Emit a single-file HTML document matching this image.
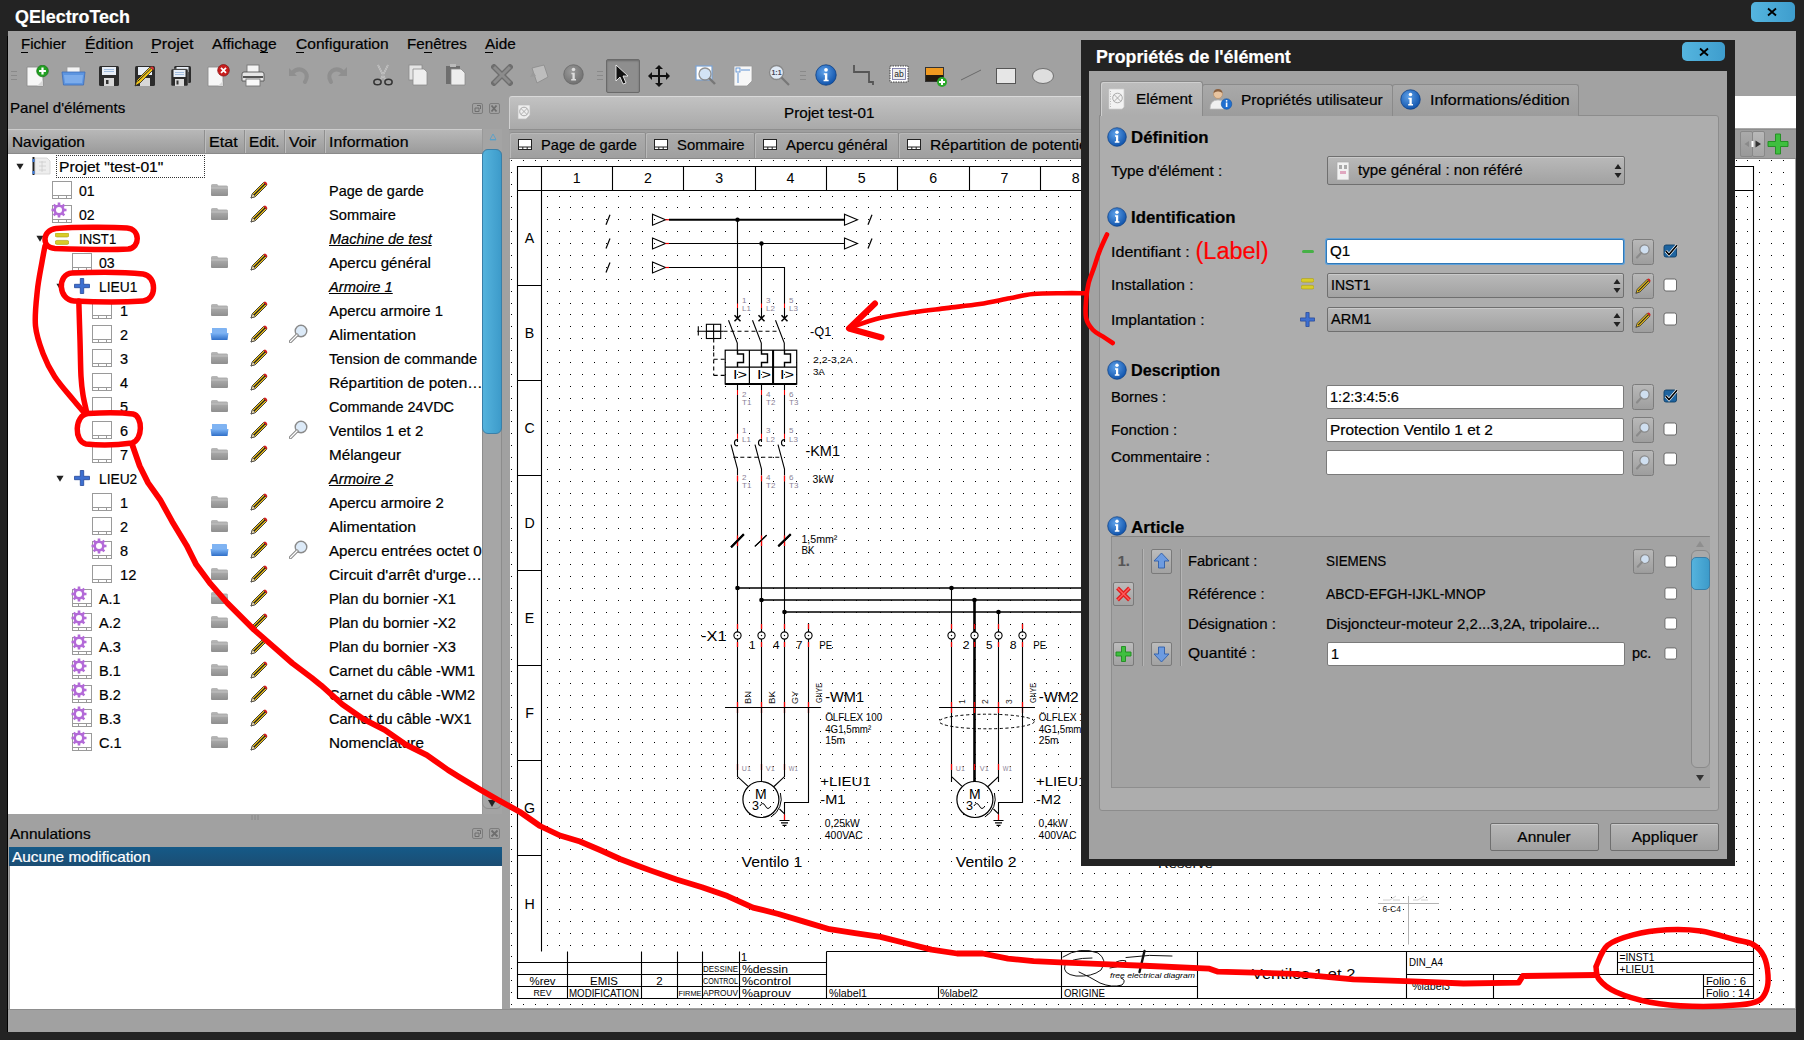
<!DOCTYPE html>
<html><head><meta charset="utf-8"><title>QElectroTech</title><style>
*{box-sizing:border-box}
html,body{margin:0;padding:0}
body{width:1804px;height:1040px;overflow:hidden;position:relative;background:#232323;font-family:"Liberation Sans",sans-serif;color:#000}
.a{position:absolute}
.t{position:absolute;white-space:nowrap;line-height:1;-webkit-text-stroke:0.2px currentColor}
</style></head>
<body>

<svg width="0" height="0" style="position:absolute">
<defs>
 <linearGradient id="gBlueF" x1="0" y1="0" x2="0" y2="1"><stop offset="0" stop-color="#7db4f5"/><stop offset="1" stop-color="#2f6fc8"/></linearGradient>
 <linearGradient id="gGrayF" x1="0" y1="0" x2="0" y2="1"><stop offset="0" stop-color="#b8b8b8"/><stop offset="1" stop-color="#8e8e8e"/></linearGradient>
 <radialGradient id="gInfo" cx="0.4" cy="0.35" r="0.7"><stop offset="0" stop-color="#5da0e8"/><stop offset="1" stop-color="#0c4fa8"/></radialGradient>
 <radialGradient id="gInfoG" cx="0.4" cy="0.35" r="0.7"><stop offset="0" stop-color="#9a9a9a"/><stop offset="1" stop-color="#6e6e6e"/></radialGradient>
 <linearGradient id="gBtn" x1="0" y1="0" x2="0" y2="1"><stop offset="0" stop-color="#b9b9b9"/><stop offset="1" stop-color="#9d9d9d"/></linearGradient>
 <symbol id="pg" viewBox="0 0 20 18"><rect x="0.5" y="0.5" width="19" height="17" fill="#fff" stroke="#9a9a9a"/><path d="M0.5 14.5H19.5M6.5 14.5V17.5M14.5 14.5V17.5" stroke="#9a9a9a" fill="none"/></symbol>
 <symbol id="gear" viewBox="0 0 16 16"><g fill="#b36ad8"><circle cx="8" cy="8" r="5.6"/><g stroke="#b36ad8" stroke-width="2.6"><path d="M8 0.5V15.5M0.5 8H15.5M2.7 2.7L13.3 13.3M13.3 2.7L2.7 13.3"/></g></g><circle cx="8" cy="8" r="3" fill="#fff"/></symbol>
 <symbol id="inst" viewBox="0 0 14 12"><rect x="0" y="0" width="14" height="4" rx="2" fill="#d8cc2a" stroke="#a89a10" stroke-width="0.6"/><rect x="0" y="7.4" width="14" height="4" rx="2" fill="#d8cc2a" stroke="#a89a10" stroke-width="0.6"/></symbol>
 <symbol id="lieu" viewBox="0 0 16 16"><path d="M6.3 0.5H9.7V6.3H15.5V9.7H9.7V15.5H6.3V9.7H0.5V6.3H6.3Z" fill="#3d6fd0" stroke="#24479a" stroke-width="0.8"/></symbol>
 <symbol id="fold" viewBox="0 0 19 14"><path d="M1 2.5Q1 1 2.5 1H7L8.5 2.5H16.5Q18 2.5 18 4V12Q18 13 17 13H2Q1 13 1 12Z" fill="url(#gGrayF)"/><path d="M1 5H18" stroke="#c9c9c9" stroke-width="0.8"/></symbol>
 <symbol id="foldb" viewBox="0 0 19 14"><path d="M2 1H16Q17 1 17 2V6H2Z" fill="#7fb3f2"/><path d="M0.5 6H18.5L17.5 13H1.5Z" fill="url(#gBlueF)"/></symbol>
 <symbol id="pen" viewBox="0 0 18 18"><path d="M1 17L2.5 12.5L13.5 1.5L16.5 4.5L5.5 15.5Z" fill="#f0c419" stroke="#2a2a2a" stroke-width="0.9"/><path d="M3.5 14.5L15 3" stroke="#222" stroke-width="1.3"/><path d="M13.5 1.5L16.5 4.5L17.3 3.7Q17.5 2.5 16.3 1.2Q15 0.3 14.3 0.7Z" fill="#d42020"/><path d="M1 17L2.5 12.5L5.5 15.5Z" fill="#e8d8b0" stroke="#333" stroke-width="0.6"/></symbol>
 <symbol id="mag" viewBox="0 0 19 19"><circle cx="12" cy="7" r="5.8" fill="#dceaf8" stroke="#8a8a8a" stroke-width="1.4"/><path d="M8 11L1.5 17.5" stroke="#8a8a8a" stroke-width="3.2" stroke-linecap="round"/><path d="M8 11L1.5 17.5" stroke="#fff" stroke-width="1.2" stroke-linecap="round"/></symbol>
 <symbol id="proj" viewBox="0 0 20 18"><path d="M4 1H16L19 4V17H4Z" fill="#eee" stroke="#d0d0d0" stroke-width="0.8"/><path d="M8 5H15M8 9H15M8 13H15M11 4V15" stroke="#ccc" stroke-width="0.8"/><rect x="1.5" y="0" width="2" height="18" fill="#222"/><rect x="1.5" y="2" width="2" height="3" fill="#3d7de0"/><rect x="1.5" y="14" width="2" height="3" fill="#3d7de0"/></symbol>
 <symbol id="tri" viewBox="0 0 10 9"><path d="M0.5 1H9.5L5 8.5Z" fill="#222"/></symbol>
 <symbol id="info" viewBox="0 0 20 20"><circle cx="10" cy="10" r="9.3" fill="url(#gInfo)" stroke="#0b3f85" stroke-width="0.7"/><circle cx="10" cy="5.3" r="1.7" fill="#fff"/><path d="M8 8.3H11.2V14.3H12.4V15.7H7.8V14.3H9V9.7H8Z" fill="#fff"/></symbol>
 <symbol id="infog" viewBox="0 0 20 20"><circle cx="10" cy="10" r="9.3" fill="url(#gInfoG)" stroke="#666" stroke-width="0.7"/><circle cx="10" cy="5.3" r="1.7" fill="#ddd"/><path d="M8 8.3H11.2V14.3H12.4V15.7H7.8V14.3H9V9.7H8Z" fill="#ddd"/></symbol>
 <symbol id="srch" viewBox="0 0 22 26"><rect x="0.5" y="0.5" width="21" height="25" rx="2" fill="url(#gBtn)" stroke="#7c7c7c"/><circle cx="12.5" cy="10.5" r="4.6" fill="#cfdff0" stroke="#8a8a8a" stroke-width="1.2"/><path d="M9.3 13.8L5 18.5" stroke="#8a8a8a" stroke-width="2.2" stroke-linecap="round"/></symbol>
 <symbol id="penb" viewBox="0 0 22 26"><rect x="0.5" y="0.5" width="21" height="25" rx="2" fill="url(#gBtn)" stroke="#7c7c7c"/><g transform="translate(3,5) scale(0.9)"><path d="M1 17L2.5 12.5L13.5 1.5L16.5 4.5L5.5 15.5Z" fill="#f0c419" stroke="#2a2a2a" stroke-width="0.9"/><path d="M3.5 14.5L15 3" stroke="#222" stroke-width="1.2"/><path d="M13.5 1.5L16.5 4.5L17.3 3.7Q17.5 2.5 16.3 1.2Q15 0.3 14.3 0.7Z" fill="#d42020"/></g></symbol>
 <symbol id="chk" viewBox="0 0 15 14"><rect x="1" y="1" width="12.5" height="12" rx="2" fill="#fff" stroke="#5e5e5e" stroke-width="0.9"/></symbol>
 <symbol id="chkon" viewBox="0 0 15 14"><rect x="1" y="1" width="12.5" height="12" rx="2" fill="#1e64a0" stroke="#0e3e68" stroke-width="0.9"/><path d="M2.8 7L6 10.5L14 1.2" stroke="#fff" stroke-width="3" fill="none"/><path d="M2.8 7L6 10.5L14 1.2" stroke="#000" stroke-width="1.6" fill="none"/></symbol>
 <symbol id="updn" viewBox="0 0 8 16"><path d="M4 1L7.5 6H0.5Z M4 15L7.5 10H0.5Z" fill="#222"/></symbol>
</defs>
</svg>
<div class="t" style="left:15.0px;top:7.8px;font-size:18px;color:#fff;font-weight:bold;"><span id="w1" style="display:inline-block;transform:scaleX(0.9930);transform-origin:left center;">QElectroTech</span></div>
<div class="a" style="left:1751px;top:2px;width:44px;height:20px;border-radius:5px;background:linear-gradient(90deg,#55b5df,#3e9dcd)"></div>
<svg class="a" style="left:1766px;top:7px" width="12" height="10"><path d="M2 1.5L10 8.5M10 1.5L2 8.5" stroke="#000" stroke-width="1.8"/></svg>
<div class="a" style="left:8px;top:31px;width:1788px;height:1001px;background:#a1a1a1"></div>
<div class="a" style="left:7px;top:36px;width:1px;height:996px;background:#000"></div>
<div class="t" style="left:21.0px;top:36.5px;font-size:14.5px;"><span id="w2" style="display:inline-block;transform:scaleX(1.0351);transform-origin:left center;">Fichier</span></div>
<div class="t" style="left:85.0px;top:36.5px;font-size:14.5px;"><span id="w3" style="display:inline-block;transform:scaleX(1.0894);transform-origin:left center;">Édition</span></div>
<div class="t" style="left:151.0px;top:36.5px;font-size:14.5px;"><span id="w4" style="display:inline-block;transform:scaleX(1.1229);transform-origin:left center;">Projet</span></div>
<div class="t" style="left:212.0px;top:36.5px;font-size:14.5px;"><span id="w5" style="display:inline-block;transform:scaleX(1.0745);transform-origin:left center;">Affichage</span></div>
<div class="t" style="left:296.0px;top:36.5px;font-size:14.5px;"><span id="w6" style="display:inline-block;transform:scaleX(1.0747);transform-origin:left center;">Configuration</span></div>
<div class="t" style="left:407.0px;top:36.5px;font-size:14.5px;"><span id="w7" style="display:inline-block;transform:scaleX(1.0458);transform-origin:left center;">Fenêtres</span></div>
<div class="t" style="left:485.0px;top:36.5px;font-size:14.5px;"><span id="w8" style="display:inline-block;transform:scaleX(1.0600);transform-origin:left center;">Aide</span></div>
<div class="a" style="left:21px;top:52px;width:7px;height:1px;background:#000"></div>
<div class="a" style="left:85px;top:52px;width:8px;height:1px;background:#000"></div>
<div class="a" style="left:151px;top:52px;width:7px;height:1px;background:#000"></div>
<div class="a" style="left:260px;top:52px;width:8px;height:1px;background:#000"></div>
<div class="a" style="left:296px;top:52px;width:8px;height:1px;background:#000"></div>
<div class="a" style="left:424px;top:52px;width:8px;height:1px;background:#000"></div>
<div class="a" style="left:485px;top:52px;width:8px;height:1px;background:#000"></div>
<div class="a" style="left:296px;top:52px;width:0px;height:0px;"></div>
<svg class="a" style="left:11px;top:70px" width="6" height="12" viewBox="0 0 6 12"><path d="M0 1.5H6M0 5.5H6M0 9.5H6" stroke="#8a8a8a" stroke-width="1"/></svg>
<svg class="a" style="left:26px;top:65px" width="24" height="22" viewBox="0 0 24 22"><path d="M1 2H12L17 7V21H1Z" fill="#f7f7f7" stroke="#8d8d8d" stroke-width="0.9"/><path d="M11 21L17 15V21" fill="#d9d9d9"/><circle cx="16.5" cy="6" r="5.8" fill="#22a022" stroke="#137013" stroke-width="0.7"/><path d="M16.5 2.6V9.4M13.1 6H19.9" stroke="#fff" stroke-width="2.2"/></svg>
<svg class="a" style="left:61px;top:65px" width="25" height="22" viewBox="0 0 25 22"><rect x="6" y="2" width="13" height="10" fill="#f4f4f4" stroke="#999" stroke-width="0.8"/><path d="M1 7H24L22.5 20H2.5Z" fill="#5d95e0" stroke="#3d6cb8" stroke-width="0.8"/><path d="M3 10H22L21 18H4Z" fill="#8ab6ef" opacity="0.7"/></svg>
<svg class="a" style="left:98px;top:65px" width="22" height="22" viewBox="0 0 22 22"><rect x="1" y="1" width="20" height="20" rx="1.5" fill="#2c2c2c"/><rect x="4" y="2" width="14" height="8" fill="#e8eef6"/><path d="M6 4.5H16M6 6.5H16" stroke="#8fb0d8" stroke-width="0.8"/><rect x="6" y="13" width="10" height="8" fill="#d8d8d8"/><rect x="8" y="15" width="2.5" height="4" fill="#333"/></svg>
<svg class="a" style="left:134px;top:65px" width="22" height="22" viewBox="0 0 22 22"><rect x="1" y="1" width="20" height="20" rx="1.5" fill="#2c2c2c"/><rect x="4" y="2" width="14" height="8" fill="#e8eef6"/><rect x="6" y="13" width="10" height="8" fill="#d8d8d8"/><path d="M1 21L3 15L16 2L19 5L6 18Z" fill="#f0c419" stroke="#222" stroke-width="0.8"/><path d="M3.5 16.5L17 3.5" stroke="#222" stroke-width="1"/><path d="M16 2L19 5L20 4Q20 2.5 18.5 1.5Z" fill="#d33"/></svg>
<svg class="a" style="left:170px;top:65px" width="22" height="22" viewBox="0 0 22 22"><rect x="4" y="1" width="17" height="17" rx="1.5" fill="#2c2c2c"/><rect x="6.5" y="2" width="12" height="5" fill="#e8eef6"/><rect x="1" y="4" width="17" height="17" rx="1.5" fill="#2c2c2c" stroke="#a0a0a0" stroke-width="0.6"/><rect x="3.5" y="5" width="12" height="7" fill="#e8eef6"/><path d="M5 7.5H14M5 9.5H14" stroke="#8fb0d8" stroke-width="0.8"/><rect x="5" y="14" width="9" height="7" fill="#d8d8d8"/><rect x="6.5" y="15.5" width="2" height="4" fill="#333"/></svg>
<svg class="a" style="left:207px;top:64px" width="24" height="23" viewBox="0 0 24 23"><path d="M1 3H12L16 7V22H1Z" fill="#f7f7f7" stroke="#8d8d8d" stroke-width="0.9"/><path d="M11 22L16 17V22" fill="#d9d9d9"/><circle cx="16.5" cy="6.3" r="5.8" fill="#c81e1e" stroke="#801010" stroke-width="0.7"/><path d="M14 3.8L19 8.8M19 3.8L14 8.8" stroke="#fff" stroke-width="1.8"/></svg>
<svg class="a" style="left:241px;top:64px" width="24" height="23" viewBox="0 0 24 23"><rect x="6" y="1" width="12" height="8" fill="#f4f4f4" stroke="#777" stroke-width="0.9"/><path d="M1 10Q1 8 3 8H21Q23 8 23 10V17H1Z" fill="#e6e6e6" stroke="#555" stroke-width="0.9"/><rect x="2" y="12" width="20" height="2" fill="#555"/><rect x="5" y="15" width="14" height="7" fill="#f9f9f9" stroke="#777" stroke-width="0.9"/></svg>
<svg class="a" style="left:288px;top:64px" width="22" height="22" viewBox="0 0 22 22"><path d="M4 9Q10 3 16 7Q21 11 17 18" fill="none" stroke="#8f8f8f" stroke-width="4" stroke-linecap="round"/><path d="M1 4V12H9Z" fill="#8f8f8f"/></svg>
<svg class="a" style="left:324px;top:64px" width="24" height="22" viewBox="0 0 24 22"><path d="M20 9Q14 3 8 7Q3 11 7 18" fill="none" stroke="#8f8f8f" stroke-width="4" stroke-linecap="round"/><path d="M23 3V12H14Z" fill="#8f8f8f"/></svg>
<svg class="a" style="left:372px;top:64px" width="22" height="22" viewBox="0 0 22 22"><path d="M6 1L13 15M16 1L9 15" stroke="#e8e8e8" stroke-width="1.6"/><path d="M6 1L13 15M16 1L9 15" stroke="#6a6a6a" stroke-width="0.5"/><ellipse cx="5.5" cy="18" rx="3.6" ry="2.8" fill="none" stroke="#333" stroke-width="1.6"/><ellipse cx="16.5" cy="18" rx="3.6" ry="2.8" fill="none" stroke="#333" stroke-width="1.6"/></svg>
<svg class="a" style="left:408px;top:64px" width="22" height="22" viewBox="0 0 22 22"><rect x="1" y="1" width="13" height="15" fill="#e4e4e4" stroke="#8a8a8a" stroke-width="0.8"/><path d="M5 5H16L19 8V21H5Z" fill="#eee" stroke="#8a8a8a" stroke-width="0.8"/></svg>
<svg class="a" style="left:445px;top:63px" width="22" height="23" viewBox="0 0 22 23"><rect x="1" y="3" width="14" height="18" fill="#6e6e6e"/><rect x="5" y="1" width="6" height="3" fill="#bbb"/><path d="M6 6H16L20 10V22H6Z" fill="#eee" stroke="#8a8a8a" stroke-width="0.8"/></svg>
<svg class="a" style="left:491px;top:64px" width="22" height="22" viewBox="0 0 22 22"><path d="M3 3L19 19M19 3L3 19" stroke="#6e6e6e" stroke-width="5.5" stroke-linecap="square"/><path d="M3 3L19 19M19 3L3 19" stroke="#8c8c8c" stroke-width="3"/></svg>
<svg class="a" style="left:527px;top:64px" width="24" height="22" viewBox="0 0 24 22"><path d="M5 4L17 1L21 13L10 19Z" fill="#bdbdbd" stroke="#8a8a8a" stroke-width="0.8"/><path d="M3 13L6 8L9 12" fill="#9a9a9a"/></svg>
<svg class="a" style="left:563px;top:64px" width="22" height="22" viewBox="0 0 22 22"><use href="#infog" width="21" height="21"/></svg>
<svg class="a" style="left:597px;top:70px" width="6" height="12" viewBox="0 0 6 12"><path d="M0 1.5H6M0 5.5H6M0 9.5H6" stroke="#8a8a8a" stroke-width="1"/></svg>
<div class="a" style="left:606px;top:59px;width:34px;height:34px;background:#8e8e8e;border:1px solid #6a6a6a;border-radius:2px;box-shadow:inset 0 1px 2px rgba(0,0,0,0.25)"></div>
<svg class="a" style="left:614px;top:64px" width="18" height="22" viewBox="0 0 18 22"><path d="M2 1V17L6 13L9 20L12 19L9 12H14Z" fill="#111" stroke="#fff" stroke-width="0.8"/></svg>
<svg class="a" style="left:647px;top:64px" width="24" height="24" viewBox="0 0 24 24"><path d="M12 1L16 5H13V11H19V8L23 12L19 16V13H13V19H16L12 23L8 19H11V13H5V16L1 12L5 8V11H11V5H8Z" fill="#111"/></svg>
<svg class="a" style="left:695px;top:64px" width="22" height="22" viewBox="0 0 22 22"><rect x="1" y="2" width="16" height="14" fill="#fff" stroke="#7aa3d6" stroke-width="1.2"/><circle cx="10" cy="10" r="6" fill="#cfe0f4" stroke="#888" stroke-width="1.3" opacity="0.9"/><path d="M14 14L20 20" stroke="#777" stroke-width="2.4"/></svg>
<svg class="a" style="left:733px;top:65px" width="20" height="22" viewBox="0 0 20 22"><path d="M1 1H19V16L14 21H1Z" fill="#f7f7f7" stroke="#999" stroke-width="0.8"/><rect x="3" y="3" width="4" height="4" fill="none" stroke="#4a86d0" stroke-width="0.8"/><path d="M5 8V18M8 5H17" stroke="#4a86d0" stroke-width="0.9"/></svg>
<svg class="a" style="left:768px;top:64px" width="24" height="24" viewBox="0 0 24 24"><circle cx="8.5" cy="8.5" r="7" fill="#dfe9f5" stroke="#888" stroke-width="1.3"/><text x="8.5" y="11" font-size="7" text-anchor="middle" font-family="Liberation Sans" font-weight="bold" fill="#445">1:1</text><path d="M13.5 13.5L21 21" stroke="#777" stroke-width="2.2"/></svg>
<svg class="a" style="left:800px;top:70px" width="6" height="12" viewBox="0 0 6 12"><path d="M0 1.5H6M0 5.5H6M0 9.5H6" stroke="#8a8a8a" stroke-width="1"/></svg>
<svg class="a" style="left:815px;top:64px" width="23" height="23" viewBox="0 0 23 23"><use href="#info" width="22" height="22"/></svg>
<svg class="a" style="left:852px;top:64px" width="24" height="22" viewBox="0 0 24 22"><path d="M2 1V8H17V18H21V21" fill="none" stroke="#555" stroke-width="1.8"/></svg>
<svg class="a" style="left:888px;top:64px" width="22" height="22" viewBox="0 0 22 22"><rect x="2" y="2" width="18" height="16" fill="#fff" stroke="#333" stroke-width="0.9" stroke-dasharray="1.5,1"/><rect x="4.5" y="4.5" width="13" height="11" fill="#eee" stroke="#6a6aa0" stroke-width="0.8"/><text x="11" y="13" font-size="8.5" text-anchor="middle" font-family="Liberation Sans" fill="#222">ab</text></svg>
<svg class="a" style="left:924px;top:64px" width="24" height="24" viewBox="0 0 24 24"><rect x="1" y="3" width="19" height="15" fill="#333"/><rect x="2" y="4" width="17" height="7" fill="#f09a20"/><rect x="2" y="11" width="17" height="6" fill="#221a10"/><circle cx="18" cy="18" r="5" fill="#2aa82a"/><path d="M18 15V21M15 18H21" stroke="#fff" stroke-width="2"/></svg>
<svg class="a" style="left:960px;top:68px" width="22" height="14" viewBox="0 0 22 14"><path d="M1 12L21 2" stroke="#6a6a6a" stroke-width="1"/></svg>
<svg class="a" style="left:995px;top:66px" width="22" height="20" viewBox="0 0 22 20"><rect x="1.5" y="2.5" width="19" height="15" fill="#e6e6e6" stroke="#555" stroke-width="1"/></svg>
<svg class="a" style="left:1031px;top:66px" width="24" height="20" viewBox="0 0 24 20"><ellipse cx="12" cy="10" rx="10.5" ry="7.5" fill="#dedede" stroke="#666" stroke-width="0.9"/></svg>
<div class="t" style="left:10.0px;top:101.4px;font-size:14.5px;"><span id="w9" style="display:inline-block;transform:scaleX(1.0402);transform-origin:left center;">Panel d'éléments</span></div>
<div class="a" style="left:472px;top:103px;width:11px;height:11px;border:1px solid #7d7d7d;border-radius:2px"></div>
<div class="a" style="left:489px;top:103px;width:11px;height:11px;border:1px solid #7d7d7d;border-radius:2px"></div>
<svg class="a" style="left:472px;top:103px" width="30" height="11"><path d="M3 5H7V8.5H3Z M5 2.5H8.5V6" fill="none" stroke="#6e6e6e" stroke-width="1"/><path d="M19.5 2.5L24.5 8.5M24.5 2.5L19.5 8.5" stroke="#6e6e6e" stroke-width="1.8"/></svg>
<div class="a" style="left:8px;top:129px;width:474px;height:25px;background:linear-gradient(#b8b8b8,#9b9b9b);border-top:1px solid #cdcdcd;border-bottom:1px solid #8a8a8a"></div>
<div class="a" style="left:204px;top:130px;width:1px;height:23px;background:#8f8f8f;box-shadow:1px 0 0 #bdbdbd"></div>
<div class="a" style="left:244px;top:130px;width:1px;height:23px;background:#8f8f8f;box-shadow:1px 0 0 #bdbdbd"></div>
<div class="a" style="left:284px;top:130px;width:1px;height:23px;background:#8f8f8f;box-shadow:1px 0 0 #bdbdbd"></div>
<div class="a" style="left:324px;top:130px;width:1px;height:23px;background:#8f8f8f;box-shadow:1px 0 0 #bdbdbd"></div>
<div class="t" style="left:12.3px;top:134.7px;font-size:14.5px;"><span id="w10" style="display:inline-block;transform:scaleX(1.0622);transform-origin:left center;">Navigation</span></div>
<div class="t" style="left:208.8px;top:134.7px;font-size:14.5px;"><span id="w11" style="display:inline-block;transform:scaleX(1.1099);transform-origin:left center;">Etat</span></div>
<div class="t" style="left:249.4px;top:134.7px;font-size:14.5px;"><span id="w12" style="display:inline-block;transform:scaleX(1.0534);transform-origin:left center;">Edit.</span></div>
<div class="t" style="left:289.3px;top:134.7px;font-size:14.5px;"><span id="w13" style="display:inline-block;transform:scaleX(1.0924);transform-origin:left center;">Voir</span></div>
<div class="t" style="left:329.2px;top:134.7px;font-size:14.5px;"><span id="w14" style="display:inline-block;transform:scaleX(1.0961);transform-origin:left center;">Information</span></div>
<div class="a" style="left:8px;top:154px;width:474px;height:660px;background:#fff"></div>
<div class="a" style="left:482px;top:129px;width:20px;height:685px;background:#a4a4a4;border-left:1px solid #999"></div>
<svg class="a" style="left:489px;top:133px" width="8" height="8"><path d="M4 1L7 6.5H1Z" fill="none" stroke="#5aa0c8" stroke-width="0.9"/><path d="M1 6.8H7" stroke="#5aa0c8" stroke-width="1.2"/></svg>
<div class="a" style="left:482px;top:149px;width:20px;height:660px;background:#a6a6a6;border:1px solid #8c8c8c;border-radius:6px"></div>
<div class="a" style="left:482px;top:149px;width:20px;height:285px;background:linear-gradient(90deg,#55b3dd,#3d9bca);border:1px solid #3a7fa8;border-radius:6px"></div>
<svg class="a" style="left:487px;top:799px" width="10" height="9"><path d="M1 1H9L5 8Z" fill="#222"/></svg>
<svg class="a" style="left:16.2px;top:162.8px;" width="8" height="7.2"><use href="#tri"/></svg>
<svg class="a" style="left:31px;top:157px;" width="20" height="18"><use href="#proj"/></svg>
<div class="t" style="left:59.0px;top:159.7px;font-size:14.5px;"><span id="w15" style="display:inline-block;transform:scaleX(1.0815);transform-origin:left center;">Projet "test-01"</span></div>
<svg class="a" style="left:52px;top:181px;" width="20" height="18"><use href="#pg"/></svg>
<div class="t" style="left:79.0px;top:183.7px;font-size:14.5px;"><span id="w16" style="display:inline-block;transform:scaleX(0.9705);transform-origin:left center;">01</span></div>
<svg class="a" style="left:210px;top:183px;" width="19" height="14"><use href="#fold"/></svg>
<svg class="a" style="left:250px;top:181px;" width="18" height="18"><use href="#pen"/></svg>
<div class="t" style="left:328.5px;top:183.7px;font-size:14.5px;"><span id="w17" style="display:inline-block;transform:scaleX(0.9964);transform-origin:left center;">Page de garde</span></div>
<svg class="a" style="left:52px;top:205px;" width="20" height="18"><use href="#pg"/></svg>
<svg class="a" style="left:51px;top:202px;" width="16" height="16"><use href="#gear"/></svg>
<div class="t" style="left:79.0px;top:207.7px;font-size:14.5px;"><span id="w18" style="display:inline-block;transform:scaleX(0.9705);transform-origin:left center;">02</span></div>
<svg class="a" style="left:210px;top:207px;" width="19" height="14"><use href="#fold"/></svg>
<svg class="a" style="left:250px;top:205px;" width="18" height="18"><use href="#pen"/></svg>
<div class="t" style="left:328.5px;top:207.7px;font-size:14.5px;"><span id="w19" style="display:inline-block;transform:scaleX(1.0127);transform-origin:left center;">Sommaire</span></div>
<svg class="a" style="left:36.2px;top:234.8px;" width="8" height="7.2"><use href="#tri"/></svg>
<svg class="a" style="left:55px;top:233px;" width="14" height="12"><use href="#inst"/></svg>
<div class="t" style="left:79.0px;top:231.7px;font-size:14.5px;"><span id="w20" style="display:inline-block;transform:scaleX(0.9049);transform-origin:left center;">INST1</span></div>
<div class="t" style="left:328.5px;top:231.7px;font-size:14.5px;font-style:italic;text-decoration:underline"><span id="w21" style="display:inline-block;transform:scaleX(1.0032);transform-origin:left center;text-decoration:underline">Machine de test</span></div>
<svg class="a" style="left:72px;top:253px;" width="20" height="18"><use href="#pg"/></svg>
<div class="t" style="left:99.0px;top:255.7px;font-size:14.5px;"><span id="w22" style="display:inline-block;transform:scaleX(0.9705);transform-origin:left center;">03</span></div>
<svg class="a" style="left:210px;top:255px;" width="19" height="14"><use href="#fold"/></svg>
<svg class="a" style="left:250px;top:253px;" width="18" height="18"><use href="#pen"/></svg>
<div class="t" style="left:328.5px;top:255.7px;font-size:14.5px;"><span id="w23" style="display:inline-block;transform:scaleX(1.0356);transform-origin:left center;">Apercu général</span></div>
<svg class="a" style="left:56.2px;top:282.8px;" width="8" height="7.2"><use href="#tri"/></svg>
<svg class="a" style="left:74px;top:278px;" width="16" height="16"><use href="#lieu"/></svg>
<div class="t" style="left:99.0px;top:279.7px;font-size:14.5px;"><span id="w24" style="display:inline-block;transform:scaleX(0.9511);transform-origin:left center;">LIEU1</span></div>
<div class="t" style="left:328.5px;top:279.7px;font-size:14.5px;font-style:italic;text-decoration:underline"><span id="w25" style="display:inline-block;transform:scaleX(1.0136);transform-origin:left center;text-decoration:underline">Armoire 1</span></div>
<svg class="a" style="left:92px;top:301px;" width="20" height="18"><use href="#pg"/></svg>
<div class="t" style="left:120.0px;top:303.7px;font-size:14.5px;">1</div>
<svg class="a" style="left:210px;top:303px;" width="19" height="14"><use href="#fold"/></svg>
<svg class="a" style="left:250px;top:301px;" width="18" height="18"><use href="#pen"/></svg>
<div class="t" style="left:328.5px;top:303.7px;font-size:14.5px;"><span id="w26" style="display:inline-block;transform:scaleX(1.0244);transform-origin:left center;">Apercu armoire 1</span></div>
<svg class="a" style="left:92px;top:325px;" width="20" height="18"><use href="#pg"/></svg>
<div class="t" style="left:120.0px;top:327.7px;font-size:14.5px;">2</div>
<svg class="a" style="left:210px;top:327px;" width="19" height="14"><use href="#foldb"/></svg>
<svg class="a" style="left:250px;top:325px;" width="18" height="18"><use href="#pen"/></svg>
<svg class="a" style="left:289px;top:324px;" width="19" height="19"><use href="#mag"/></svg>
<div class="t" style="left:328.5px;top:327.7px;font-size:14.5px;"><span id="w27" style="display:inline-block;transform:scaleX(1.0904);transform-origin:left center;">Alimentation</span></div>
<svg class="a" style="left:92px;top:349px;" width="20" height="18"><use href="#pg"/></svg>
<div class="t" style="left:120.0px;top:351.7px;font-size:14.5px;">3</div>
<svg class="a" style="left:210px;top:351px;" width="19" height="14"><use href="#fold"/></svg>
<svg class="a" style="left:250px;top:349px;" width="18" height="18"><use href="#pen"/></svg>
<div class="t" style="left:328.5px;top:351.7px;font-size:14.5px;"><span id="w28" style="display:inline-block;transform:scaleX(1.0159);transform-origin:left center;">Tension de commande</span></div>
<svg class="a" style="left:92px;top:373px;" width="20" height="18"><use href="#pg"/></svg>
<div class="t" style="left:120.0px;top:375.7px;font-size:14.5px;">4</div>
<svg class="a" style="left:210px;top:375px;" width="19" height="14"><use href="#fold"/></svg>
<svg class="a" style="left:250px;top:373px;" width="18" height="18"><use href="#pen"/></svg>
<div class="t" style="left:328.5px;top:375.7px;font-size:14.5px;"><span id="w29" style="display:inline-block;transform:scaleX(1.0584);transform-origin:left center;">Répartition de poten…</span></div>
<svg class="a" style="left:92px;top:397px;" width="20" height="18"><use href="#pg"/></svg>
<div class="t" style="left:120.0px;top:399.7px;font-size:14.5px;">5</div>
<svg class="a" style="left:210px;top:399px;" width="19" height="14"><use href="#fold"/></svg>
<svg class="a" style="left:250px;top:397px;" width="18" height="18"><use href="#pen"/></svg>
<div class="t" style="left:328.5px;top:399.7px;font-size:14.5px;"><span id="w30" style="display:inline-block;transform:scaleX(0.9941);transform-origin:left center;">Commande 24VDC</span></div>
<svg class="a" style="left:92px;top:421px;" width="20" height="18"><use href="#pg"/></svg>
<div class="t" style="left:120.0px;top:423.7px;font-size:14.5px;">6</div>
<svg class="a" style="left:210px;top:423px;" width="19" height="14"><use href="#foldb"/></svg>
<svg class="a" style="left:250px;top:421px;" width="18" height="18"><use href="#pen"/></svg>
<svg class="a" style="left:289px;top:420px;" width="19" height="19"><use href="#mag"/></svg>
<div class="t" style="left:328.5px;top:423.7px;font-size:14.5px;"><span id="w31" style="display:inline-block;transform:scaleX(1.0346);transform-origin:left center;">Ventilos 1 et 2</span></div>
<svg class="a" style="left:92px;top:445px;" width="20" height="18"><use href="#pg"/></svg>
<div class="t" style="left:120.0px;top:447.7px;font-size:14.5px;">7</div>
<svg class="a" style="left:210px;top:447px;" width="19" height="14"><use href="#fold"/></svg>
<svg class="a" style="left:250px;top:445px;" width="18" height="18"><use href="#pen"/></svg>
<div class="t" style="left:328.5px;top:447.7px;font-size:14.5px;"><span id="w32" style="display:inline-block;transform:scaleX(1.0518);transform-origin:left center;">Mélangeur</span></div>
<svg class="a" style="left:56.2px;top:474.8px;" width="8" height="7.2"><use href="#tri"/></svg>
<svg class="a" style="left:74px;top:470px;" width="16" height="16"><use href="#lieu"/></svg>
<div class="t" style="left:99.0px;top:471.7px;font-size:14.5px;"><span id="w33" style="display:inline-block;transform:scaleX(0.9485);transform-origin:left center;">LIEU2</span></div>
<div class="t" style="left:328.5px;top:471.7px;font-size:14.5px;font-style:italic;text-decoration:underline"><span id="w34" style="display:inline-block;transform:scaleX(1.0201);transform-origin:left center;text-decoration:underline">Armoire 2</span></div>
<svg class="a" style="left:92px;top:493px;" width="20" height="18"><use href="#pg"/></svg>
<div class="t" style="left:120.0px;top:495.7px;font-size:14.5px;">1</div>
<svg class="a" style="left:210px;top:495px;" width="19" height="14"><use href="#fold"/></svg>
<svg class="a" style="left:250px;top:493px;" width="18" height="18"><use href="#pen"/></svg>
<div class="t" style="left:328.5px;top:495.7px;font-size:14.5px;"><span id="w35" style="display:inline-block;transform:scaleX(1.0316);transform-origin:left center;">Apercu armoire 2</span></div>
<svg class="a" style="left:92px;top:517px;" width="20" height="18"><use href="#pg"/></svg>
<div class="t" style="left:120.0px;top:519.7px;font-size:14.5px;">2</div>
<svg class="a" style="left:210px;top:519px;" width="19" height="14"><use href="#fold"/></svg>
<svg class="a" style="left:250px;top:517px;" width="18" height="18"><use href="#pen"/></svg>
<div class="t" style="left:328.5px;top:519.7px;font-size:14.5px;"><span id="w36" style="display:inline-block;transform:scaleX(1.0904);transform-origin:left center;">Alimentation</span></div>
<svg class="a" style="left:92px;top:541px;" width="20" height="18"><use href="#pg"/></svg>
<svg class="a" style="left:91px;top:538px;" width="16" height="16"><use href="#gear"/></svg>
<div class="t" style="left:120.0px;top:543.7px;font-size:14.5px;">8</div>
<svg class="a" style="left:210px;top:543px;" width="19" height="14"><use href="#foldb"/></svg>
<svg class="a" style="left:250px;top:541px;" width="18" height="18"><use href="#pen"/></svg>
<svg class="a" style="left:289px;top:540px;" width="19" height="19"><use href="#mag"/></svg>
<div class="t" style="left:328.5px;top:543.7px;font-size:14.5px;"><span id="w37" style="display:inline-block;transform:scaleX(1.0469);transform-origin:left center;">Apercu entrées octet 0</span></div>
<svg class="a" style="left:92px;top:565px;" width="20" height="18"><use href="#pg"/></svg>
<div class="t" style="left:120.0px;top:567.7px;font-size:14.5px;"><span id="w38" style="display:inline-block;transform:scaleX(1.0174);transform-origin:left center;">12</span></div>
<svg class="a" style="left:210px;top:567px;" width="19" height="14"><use href="#fold"/></svg>
<svg class="a" style="left:250px;top:565px;" width="18" height="18"><use href="#pen"/></svg>
<div class="t" style="left:328.5px;top:567.7px;font-size:14.5px;"><span id="w39" style="display:inline-block;transform:scaleX(1.0598);transform-origin:left center;">Circuit d'arrêt d'urge…</span></div>
<svg class="a" style="left:72px;top:589px;" width="20" height="18"><use href="#pg"/></svg>
<svg class="a" style="left:71px;top:586px;" width="16" height="16"><use href="#gear"/></svg>
<div class="t" style="left:99.0px;top:591.7px;font-size:14.5px;"><span id="w40" style="display:inline-block;transform:scaleX(0.9822);transform-origin:left center;">A.1</span></div>
<svg class="a" style="left:210px;top:591px;" width="19" height="14"><use href="#fold"/></svg>
<svg class="a" style="left:250px;top:589px;" width="18" height="18"><use href="#pen"/></svg>
<div class="t" style="left:328.5px;top:591.7px;font-size:14.5px;"><span id="w41" style="display:inline-block;transform:scaleX(1.0151);transform-origin:left center;">Plan du bornier -X1</span></div>
<svg class="a" style="left:72px;top:613px;" width="20" height="18"><use href="#pg"/></svg>
<svg class="a" style="left:71px;top:610px;" width="16" height="16"><use href="#gear"/></svg>
<div class="t" style="left:99.0px;top:615.7px;font-size:14.5px;">A.2</div>
<svg class="a" style="left:210px;top:615px;" width="19" height="14"><use href="#fold"/></svg>
<svg class="a" style="left:250px;top:613px;" width="18" height="18"><use href="#pen"/></svg>
<div class="t" style="left:328.5px;top:615.7px;font-size:14.5px;"><span id="w42" style="display:inline-block;transform:scaleX(1.0151);transform-origin:left center;">Plan du bornier -X2</span></div>
<svg class="a" style="left:72px;top:637px;" width="20" height="18"><use href="#pg"/></svg>
<svg class="a" style="left:71px;top:634px;" width="16" height="16"><use href="#gear"/></svg>
<div class="t" style="left:99.0px;top:639.7px;font-size:14.5px;">A.3</div>
<svg class="a" style="left:210px;top:639px;" width="19" height="14"><use href="#fold"/></svg>
<svg class="a" style="left:250px;top:637px;" width="18" height="18"><use href="#pen"/></svg>
<div class="t" style="left:328.5px;top:639.7px;font-size:14.5px;"><span id="w43" style="display:inline-block;transform:scaleX(1.0151);transform-origin:left center;">Plan du bornier -X3</span></div>
<svg class="a" style="left:72px;top:661px;" width="20" height="18"><use href="#pg"/></svg>
<svg class="a" style="left:71px;top:658px;" width="16" height="16"><use href="#gear"/></svg>
<div class="t" style="left:99.0px;top:663.7px;font-size:14.5px;">B.1</div>
<svg class="a" style="left:210px;top:663px;" width="19" height="14"><use href="#fold"/></svg>
<svg class="a" style="left:250px;top:661px;" width="18" height="18"><use href="#pen"/></svg>
<div class="t" style="left:328.5px;top:663.7px;font-size:14.5px;"><span id="w44" style="display:inline-block;transform:scaleX(1.0065);transform-origin:left center;">Carnet du câble -WM1</span></div>
<svg class="a" style="left:72px;top:685px;" width="20" height="18"><use href="#pg"/></svg>
<svg class="a" style="left:71px;top:682px;" width="16" height="16"><use href="#gear"/></svg>
<div class="t" style="left:99.0px;top:687.7px;font-size:14.5px;">B.2</div>
<svg class="a" style="left:210px;top:687px;" width="19" height="14"><use href="#fold"/></svg>
<svg class="a" style="left:250px;top:685px;" width="18" height="18"><use href="#pen"/></svg>
<div class="t" style="left:328.5px;top:687.7px;font-size:14.5px;"><span id="w45" style="display:inline-block;transform:scaleX(1.0065);transform-origin:left center;">Carnet du câble -WM2</span></div>
<svg class="a" style="left:72px;top:709px;" width="20" height="18"><use href="#pg"/></svg>
<svg class="a" style="left:71px;top:706px;" width="16" height="16"><use href="#gear"/></svg>
<div class="t" style="left:99.0px;top:711.7px;font-size:14.5px;">B.3</div>
<svg class="a" style="left:210px;top:711px;" width="19" height="14"><use href="#fold"/></svg>
<svg class="a" style="left:250px;top:709px;" width="18" height="18"><use href="#pen"/></svg>
<div class="t" style="left:328.5px;top:711.7px;font-size:14.5px;"><span id="w46" style="display:inline-block;transform:scaleX(0.9996);transform-origin:left center;">Carnet du câble -WX1</span></div>
<svg class="a" style="left:72px;top:733px;" width="20" height="18"><use href="#pg"/></svg>
<svg class="a" style="left:71px;top:730px;" width="16" height="16"><use href="#gear"/></svg>
<div class="t" style="left:99.0px;top:735.7px;font-size:14.5px;">C.1</div>
<svg class="a" style="left:210px;top:735px;" width="19" height="14"><use href="#fold"/></svg>
<svg class="a" style="left:250px;top:733px;" width="18" height="18"><use href="#pen"/></svg>
<div class="t" style="left:328.5px;top:735.7px;font-size:14.5px;"><span id="w47" style="display:inline-block;transform:scaleX(1.0509);transform-origin:left center;">Nomenclature</span></div>
<div class="a" style="left:56px;top:155px;width:149px;height:23px;border:1px dotted #333"></div>
<svg class="a" style="left:251px;top:815px" width="8" height="5"><path d="M1 0V5M4 0V5M7 0V5" stroke="#888" stroke-width="1"/></svg>
<div class="t" style="left:10.0px;top:826.7px;font-size:14.5px;"><span id="w48" style="display:inline-block;transform:scaleX(1.0646);transform-origin:left center;">Annulations</span></div>
<svg class="a" style="left:472px;top:828px" width="30" height="11"><rect x="0.5" y="0.5" width="10" height="10" rx="1.5" fill="none" stroke="#7d7d7d"/><rect x="17.5" y="0.5" width="10" height="10" rx="1.5" fill="none" stroke="#7d7d7d"/><path d="M3 5H7V8.5H3Z M5 2.5H8.5V6" fill="none" stroke="#6e6e6e" stroke-width="1"/><path d="M19.5 2.5L25.5 8.5M25.5 2.5L19.5 8.5" stroke="#6e6e6e" stroke-width="1.8"/></svg>
<div class="a" style="left:9px;top:847px;width:493px;height:162px;background:#fff;border-left:1px solid #8a8a8a"></div>
<div class="a" style="left:9px;top:847px;width:493px;height:19px;background:linear-gradient(#155a88,#1b4d73)"></div>
<div class="t" style="left:12.0px;top:849.7px;font-size:14.5px;color:#fff;"><span id="w49" style="display:inline-block;transform:scaleX(1.0605);transform-origin:left center;">Aucune modification</span></div>
<div class="a" style="left:8px;top:1009px;width:1788px;height:23px;background:#a1a1a1;border-top:1px solid #8d8d8d"></div>
<div class="a" style="left:509px;top:96px;width:1287px;height:33px;background:linear-gradient(#c2c2c2,#a9a9a9);border-top:1px solid #d9d9d9;border-left:1px solid #d0d0d0;border-radius:3px 0 0 0"></div>
<div class="a" style="left:1735px;top:96px;width:61px;height:32px;background:#fff"></div>
<svg class="a" style="left:517px;top:104px" width="14" height="16" viewBox="0 0 14 16"><path d="M1 1H13V11L9 15H1Z" fill="#eee" stroke="#bbb" stroke-width="0.7"/><circle cx="7" cy="7.5" r="4.3" fill="none" stroke="#999" stroke-width="0.8"/><path d="M4 4.5L10 10.5M10 4.5L4 10.5" stroke="#999" stroke-width="0.7"/></svg>
<div class="t" style="left:783.7px;top:105.7px;font-size:14.5px;"><span id="w50" style="display:inline-block;transform:scaleX(1.0500);transform-origin:left center;">Projet test-01</span></div>
<div class="a" style="left:509px;top:129px;width:1287px;height:30px;background:#9e9e9e;border-top:1px solid #8e8e8e"></div>
<div class="a" style="left:510px;top:132px;width:136px;height:26px;background:linear-gradient(#adadad,#9f9f9f);border-top:1px solid #8f8f8f;border-right:1px solid #8c8c8c;border-radius:2px 2px 0 0;box-shadow:inset 1px 1px 0 #b9b9b9"></div>
<svg class="a" style="left:518px;top:139px" width="15" height="11" viewBox="0 0 15 11"><rect x="0.5" y="0.5" width="13" height="10" fill="#fff" stroke="#222"/><path d="M0.5 8H13.5M4.8 8V10.5M9.2 8V10.5" stroke="#222" stroke-width="1"/></svg>
<div class="t" style="left:540.6px;top:137.9px;font-size:14.5px;"><span id="w51" style="display:inline-block;transform:scaleX(1.0081);transform-origin:left center;">Page de garde</span></div>
<div class="a" style="left:646px;top:132px;width:109px;height:26px;background:linear-gradient(#adadad,#9f9f9f);border-top:1px solid #8f8f8f;border-right:1px solid #8c8c8c;border-radius:2px 2px 0 0;box-shadow:inset 1px 1px 0 #b9b9b9"></div>
<svg class="a" style="left:654px;top:139px" width="15" height="11" viewBox="0 0 15 11"><rect x="0.5" y="0.5" width="13" height="10" fill="#fff" stroke="#222"/><path d="M0.5 8H13.5M4.8 8V10.5M9.2 8V10.5" stroke="#222" stroke-width="1"/></svg>
<div class="t" style="left:676.6px;top:137.9px;font-size:14.5px;"><span id="w52" style="display:inline-block;transform:scaleX(1.0235);transform-origin:left center;">Sommaire</span></div>
<div class="a" style="left:755px;top:132px;width:144px;height:26px;background:linear-gradient(#adadad,#9f9f9f);border-top:1px solid #8f8f8f;border-right:1px solid #8c8c8c;border-radius:2px 2px 0 0;box-shadow:inset 1px 1px 0 #b9b9b9"></div>
<svg class="a" style="left:763px;top:139px" width="15" height="11" viewBox="0 0 15 11"><rect x="0.5" y="0.5" width="13" height="10" fill="#fff" stroke="#222"/><path d="M0.5 8H13.5M4.8 8V10.5M9.2 8V10.5" stroke="#222" stroke-width="1"/></svg>
<div class="t" style="left:785.6px;top:137.9px;font-size:14.5px;"><span id="w53" style="display:inline-block;transform:scaleX(1.0335);transform-origin:left center;">Apercu général</span></div>
<div class="a" style="left:899px;top:132px;width:201px;height:26px;background:linear-gradient(#adadad,#9f9f9f);border-top:1px solid #8f8f8f;border-right:1px solid #8c8c8c;border-radius:2px 2px 0 0;box-shadow:inset 1px 1px 0 #b9b9b9"></div>
<svg class="a" style="left:907px;top:139px" width="15" height="11" viewBox="0 0 15 11"><rect x="0.5" y="0.5" width="13" height="10" fill="#fff" stroke="#222"/><path d="M0.5 8H13.5M4.8 8V10.5M9.2 8V10.5" stroke="#222" stroke-width="1"/></svg>
<div class="t" style="left:929.6px;top:137.9px;font-size:14.5px;"><span id="w54" style="display:inline-block;transform:scaleX(1.0815);transform-origin:left center;">Répartition de potentiel</span></div>
<div class="a" style="left:509px;top:158px;width:1287px;height:1px;background:#8a8a8a"></div>
<div class="a" style="left:1740px;top:131px;width:13px;height:26px;background:linear-gradient(#aaa,#999);border:1px solid #888;border-radius:2px"></div>
<div class="a" style="left:1752px;top:131px;width:13px;height:26px;background:linear-gradient(#b8b8b8,#a5a5a5);border:1px solid #888;border-radius:2px"></div>
<svg class="a" style="left:1740px;top:131px" width="56" height="26"><path d="M9 10V16L4.5 13Z" fill="#8a8a8a"/><path d="M756 0" /><rect x="11.5" y="10" width="2" height="6" fill="#fff"/><path d="M15.5 9.5V16.5L21 13Z" fill="#333"/><path d="M35.5 3H40.5V10.5H48V15.5H40.5V23H35.5V15.5H28V10.5H35.5Z" fill="#3fbf3f" stroke="#1e8c1e" stroke-width="0.9"/></svg>
<div class="a" style="left:510px;top:159px;width:1285px;height:849px;background:#fff"></div>
<svg class="a" style="left:0;top:0" width="1804" height="1040" viewBox="0 0 1804 1040" font-family="Liberation Sans"><clipPath id="cpd"><rect x="510" y="159" width="1285" height="849"/></clipPath><g clip-path="url(#cpd)"><pattern id="dotp" x="511" y="148" width="107" height="107" patternUnits="userSpaceOnUse"><rect x="0" y="0" width="1" height="1"/><rect x="0" y="12" width="1" height="1"/><rect x="0" y="24" width="1" height="1"/><rect x="0" y="36" width="1" height="1"/><rect x="0" y="48" width="1" height="1"/><rect x="0" y="59" width="1" height="1"/><rect x="0" y="71" width="1" height="1"/><rect x="0" y="83" width="1" height="1"/><rect x="0" y="95" width="1" height="1"/><rect x="12" y="0" width="1" height="1"/><rect x="12" y="12" width="1" height="1"/><rect x="12" y="24" width="1" height="1"/><rect x="12" y="36" width="1" height="1"/><rect x="12" y="48" width="1" height="1"/><rect x="12" y="59" width="1" height="1"/><rect x="12" y="71" width="1" height="1"/><rect x="12" y="83" width="1" height="1"/><rect x="12" y="95" width="1" height="1"/><rect x="24" y="0" width="1" height="1"/><rect x="24" y="12" width="1" height="1"/><rect x="24" y="24" width="1" height="1"/><rect x="24" y="36" width="1" height="1"/><rect x="24" y="48" width="1" height="1"/><rect x="24" y="59" width="1" height="1"/><rect x="24" y="71" width="1" height="1"/><rect x="24" y="83" width="1" height="1"/><rect x="24" y="95" width="1" height="1"/><rect x="36" y="0" width="1" height="1"/><rect x="36" y="12" width="1" height="1"/><rect x="36" y="24" width="1" height="1"/><rect x="36" y="36" width="1" height="1"/><rect x="36" y="48" width="1" height="1"/><rect x="36" y="59" width="1" height="1"/><rect x="36" y="71" width="1" height="1"/><rect x="36" y="83" width="1" height="1"/><rect x="36" y="95" width="1" height="1"/><rect x="48" y="0" width="1" height="1"/><rect x="48" y="12" width="1" height="1"/><rect x="48" y="24" width="1" height="1"/><rect x="48" y="36" width="1" height="1"/><rect x="48" y="48" width="1" height="1"/><rect x="48" y="59" width="1" height="1"/><rect x="48" y="71" width="1" height="1"/><rect x="48" y="83" width="1" height="1"/><rect x="48" y="95" width="1" height="1"/><rect x="59" y="0" width="1" height="1"/><rect x="59" y="12" width="1" height="1"/><rect x="59" y="24" width="1" height="1"/><rect x="59" y="36" width="1" height="1"/><rect x="59" y="48" width="1" height="1"/><rect x="59" y="59" width="1" height="1"/><rect x="59" y="71" width="1" height="1"/><rect x="59" y="83" width="1" height="1"/><rect x="59" y="95" width="1" height="1"/><rect x="71" y="0" width="1" height="1"/><rect x="71" y="12" width="1" height="1"/><rect x="71" y="24" width="1" height="1"/><rect x="71" y="36" width="1" height="1"/><rect x="71" y="48" width="1" height="1"/><rect x="71" y="59" width="1" height="1"/><rect x="71" y="71" width="1" height="1"/><rect x="71" y="83" width="1" height="1"/><rect x="71" y="95" width="1" height="1"/><rect x="83" y="0" width="1" height="1"/><rect x="83" y="12" width="1" height="1"/><rect x="83" y="24" width="1" height="1"/><rect x="83" y="36" width="1" height="1"/><rect x="83" y="48" width="1" height="1"/><rect x="83" y="59" width="1" height="1"/><rect x="83" y="71" width="1" height="1"/><rect x="83" y="83" width="1" height="1"/><rect x="83" y="95" width="1" height="1"/><rect x="95" y="0" width="1" height="1"/><rect x="95" y="12" width="1" height="1"/><rect x="95" y="24" width="1" height="1"/><rect x="95" y="36" width="1" height="1"/><rect x="95" y="48" width="1" height="1"/><rect x="95" y="59" width="1" height="1"/><rect x="95" y="71" width="1" height="1"/><rect x="95" y="83" width="1" height="1"/><rect x="95" y="95" width="1" height="1"/></pattern><rect x="510" y="159" width="1286" height="849" fill="url(#dotp)"/><rect x="517.5" y="166.5" width="1236.0" height="24" fill="#fff"/><rect x="517.5" y="166.5" width="24" height="785.0" fill="#fff"/><rect x="517.5" y="951.5" width="1236.0" height="47" fill="#fff"/><path d="M517.5 166.5H1753.5V998.5H517.5Z M517.5 190.5H1753.5M541.5 166.5V951.5 M612.5 166.5V190.5 M683.5 166.5V190.5 M755.5 166.5V190.5 M826.5 166.5V190.5 M897.5 166.5V190.5 M969.5 166.5V190.5 M1040.5 166.5V190.5 M1111.5 166.5V190.5 M1182.5 166.5V190.5 M1254.5 166.5V190.5 M1325.5 166.5V190.5 M1396.5 166.5V190.5 M1468.5 166.5V190.5 M1539.5 166.5V190.5 M1610.5 166.5V190.5 M1682.5 166.5V190.5 M517.5 285.5H541.5 M517.5 380.5H541.5 M517.5 475.5H541.5 M517.5 570.5H541.5 M517.5 665.5H541.5 M517.5 760.5H541.5 M517.5 855.5H541.5" stroke="#000" stroke-width="1.1" fill="none"/><text x="576.6" y="183.1" font-size="14.2" text-anchor="middle" fill="#000">1</text><text x="647.9" y="183.1" font-size="14.2" text-anchor="middle" fill="#000">2</text><text x="719.2" y="183.1" font-size="14.2" text-anchor="middle" fill="#000">3</text><text x="790.5" y="183.1" font-size="14.2" text-anchor="middle" fill="#000">4</text><text x="861.8" y="183.1" font-size="14.2" text-anchor="middle" fill="#000">5</text><text x="933.1" y="183.1" font-size="14.2" text-anchor="middle" fill="#000">6</text><text x="1004.4" y="183.1" font-size="14.2" text-anchor="middle" fill="#000">7</text><text x="1075.7" y="183.1" font-size="14.2" text-anchor="middle" fill="#000">8</text><text x="1147.0" y="183.1" font-size="14.2" text-anchor="middle" fill="#000">9</text><text x="1218.3" y="183.1" font-size="14.2" text-anchor="middle" fill="#000">10</text><text x="1289.6" y="183.1" font-size="14.2" text-anchor="middle" fill="#000">11</text><text x="1360.9" y="183.1" font-size="14.2" text-anchor="middle" fill="#000">12</text><text x="1432.2" y="183.1" font-size="14.2" text-anchor="middle" fill="#000">13</text><text x="1503.5" y="183.1" font-size="14.2" text-anchor="middle" fill="#000">14</text><text x="1574.8" y="183.1" font-size="14.2" text-anchor="middle" fill="#000">15</text><text x="1646.1" y="183.1" font-size="14.2" text-anchor="middle" fill="#000">16</text><text x="1717.4" y="183.1" font-size="14.2" text-anchor="middle" fill="#000">17</text><text x="529.5" y="243.0" font-size="14.2" text-anchor="middle" fill="#000">A</text><text x="529.5" y="338.1" font-size="14.2" text-anchor="middle" fill="#000">B</text><text x="529.5" y="433.1" font-size="14.2" text-anchor="middle" fill="#000">C</text><text x="529.5" y="528.2" font-size="14.2" text-anchor="middle" fill="#000">D</text><text x="529.5" y="623.3" font-size="14.2" text-anchor="middle" fill="#000">E</text><text x="529.5" y="718.3" font-size="14.2" text-anchor="middle" fill="#000">F</text><text x="529.5" y="813.4" font-size="14.2" text-anchor="middle" fill="#000">G</text><text x="529.5" y="908.5" font-size="14.2" text-anchor="middle" fill="#000">H</text><path d="M517.5 962.5H826.5 M517.5 974.5H826.5 M517.5 986.5H826.5 M567.5 951.5V998.5 M641.5 951.5V998.5 M677.5 951.5V998.5 M702.5 951.5V998.5 M739.5 951.5V998.5 M826.5 951.5V998.5 M826.5 951.5H1753.5M826.5 986.5H1061.5M938.5 986.5V998.5M1061.5 951.5V998.5M1061.5 986.5H1197.5M1197.5 951.5V998.5M1406.5 951.5V998.5 M1406.5 974.5H1753.5M1493.5 974.5V998.5M1617.5 951.5V974.5M1617.5 962.5H1753.5M1703.5 974.5V998.5M1703.5 986.5H1753.5" stroke="#000" stroke-width="1.1" fill="none"/><text x="741" y="961" font-size="11" text-anchor="start" fill="#000">1</text><text x="720.5" y="972" font-size="8.5" text-anchor="middle" fill="#000" textLength="35" lengthAdjust="spacingAndGlyphs">DESSINE</text><text x="742" y="972.5" font-size="11.5" text-anchor="start" fill="#000" textLength="46" lengthAdjust="spacingAndGlyphs">%dessin</text><text x="542.5" y="984.5" font-size="11.5" text-anchor="middle" fill="#000" textLength="26" lengthAdjust="spacingAndGlyphs">%rev</text><text x="604" y="984.5" font-size="11.5" text-anchor="middle" fill="#000" textLength="28" lengthAdjust="spacingAndGlyphs">EMIS</text><text x="659.5" y="984.5" font-size="11.5" text-anchor="middle" fill="#000">2</text><text x="720.5" y="984" font-size="8.5" text-anchor="middle" fill="#000" textLength="35" lengthAdjust="spacingAndGlyphs">CONTROL</text><text x="742" y="984.5" font-size="11.5" text-anchor="start" fill="#000" textLength="49" lengthAdjust="spacingAndGlyphs">%control</text><text x="542.5" y="996" font-size="9" text-anchor="middle" fill="#000" textLength="18" lengthAdjust="spacingAndGlyphs">REV</text><text x="604" y="996.5" font-size="11.5" text-anchor="middle" fill="#000" textLength="70" lengthAdjust="spacingAndGlyphs">MODIFICATION</text><text x="690" y="996" font-size="8" text-anchor="middle" fill="#000" textLength="23" lengthAdjust="spacingAndGlyphs">FIRME</text><text x="720.5" y="996" font-size="9" text-anchor="middle" fill="#000" textLength="35" lengthAdjust="spacingAndGlyphs">APROUV</text><text x="742" y="996.5" font-size="11.5" text-anchor="start" fill="#000" textLength="49" lengthAdjust="spacingAndGlyphs">%aprouv</text><text x="829" y="996.5" font-size="11.5" text-anchor="start" fill="#000" textLength="38" lengthAdjust="spacingAndGlyphs">%label1</text><text x="940" y="996.5" font-size="11.5" text-anchor="start" fill="#000" textLength="38" lengthAdjust="spacingAndGlyphs">%label2</text><text x="1064" y="996.5" font-size="11.5" text-anchor="start" fill="#000" textLength="41" lengthAdjust="spacingAndGlyphs">ORIGINE</text><text x="1303.6" y="979.3" font-size="15" text-anchor="middle" fill="#000" textLength="103.5" lengthAdjust="spacingAndGlyphs">Ventilos 1 et 2</text><text x="1409" y="965.5" font-size="11" text-anchor="start" fill="#000" textLength="34" lengthAdjust="spacingAndGlyphs">DIN_A4</text><text x="1412" y="990" font-size="11.5" text-anchor="start" fill="#000" textLength="38" lengthAdjust="spacingAndGlyphs">%label3</text><text x="1619.5" y="961" font-size="11" text-anchor="start" fill="#000" textLength="35" lengthAdjust="spacingAndGlyphs">=INST1</text><text x="1619.5" y="972.5" font-size="11" text-anchor="start" fill="#000" textLength="35" lengthAdjust="spacingAndGlyphs">+LIEU1</text><text x="1706" y="984.5" font-size="11" text-anchor="start" fill="#000" textLength="40" lengthAdjust="spacingAndGlyphs">Folio : 6</text><text x="1706" y="996.5" font-size="11" text-anchor="start" fill="#000" textLength="44" lengthAdjust="spacingAndGlyphs">Folio : 14</text><g fill="none" stroke="#111" stroke-width="1" stroke-linecap="round"><path d="M1063 957Q1080 946 1098 953Q1108 960 1101 970Q1092 977 1076 976Q1062 974 1065 965Q1070 958 1092 958"/><path d="M1079 972Q1090 977 1100 983Q1112 988 1122 985Q1127 980 1121 978"/><path d="M1113 964Q1120 959 1126 961Q1125 966 1110 968"/><path d="M1126 957.5Q1150 954 1172 956"/></g><path d="M1144.5 951L1139.5 972" stroke="#111" stroke-width="2.4" stroke-linecap="round"/><text x="1110" y="978.2" font-size="8" text-anchor="start" fill="#000" textLength="85" lengthAdjust="spacingAndGlyphs" font-style="italic" fill="#222">free electrical diagram</text><path d="M606 224.7L610 214.7" stroke="#000" stroke-width="1.2"/><path d="M652.5 214.2L665.5 219.7L652.5 225.2Z" fill="none" stroke="#000" stroke-width="1.1"/><path d="M665.5 219.7H669" stroke="#e00" stroke-width="1.2"/><path d="M844.5 214.2L857.5 219.7L844.5 225.2Z" fill="none" stroke="#000" stroke-width="1.1"/><path d="M868 224.7L872 214.7" stroke="#000" stroke-width="1.2"/><path d="M606 248.5L610 238.5" stroke="#000" stroke-width="1.2"/><path d="M652.5 238.0L665.5 243.5L652.5 249.0Z" fill="none" stroke="#000" stroke-width="1.1"/><path d="M665.5 243.5H669" stroke="#e00" stroke-width="1.2"/><path d="M844.5 238.0L857.5 243.5L844.5 249.0Z" fill="none" stroke="#000" stroke-width="1.1"/><path d="M868 248.5L872 238.5" stroke="#000" stroke-width="1.2"/><path d="M606 272.5L610 262.5" stroke="#000" stroke-width="1.2"/><path d="M652.5 262.0L665.5 267.5L652.5 273.0Z" fill="none" stroke="#000" stroke-width="1.1"/><path d="M665.5 267.5H669" stroke="#e00" stroke-width="1.2"/><path d="M669 219.7H844.5" stroke="#000" stroke-width="2"/><path d="M669 243.5H844.5" stroke="#000" stroke-width="1.1"/><path d="M669 267.5H784.5V302" stroke="#000" stroke-width="1.1" fill="none"/><path d="M737.5 219.7V302M761.5 243.5V302" stroke="#000" stroke-width="1.1"/><circle cx="737.5" cy="219.7" r="2.2"/><circle cx="761.5" cy="243.5" r="2.2"/><path d="M737.5 302V304M737.5 308V318" stroke="#000" stroke-width="1.1"/><path d="M737.5 303.5V308" stroke="#e00" stroke-width="1.1"/><path d="M734.5 315.3L740.5 321.3M740.5 315.3L734.5 321.3" stroke="#000" stroke-width="1.5"/><text x="742.0" y="302.7" font-size="8" text-anchor="start" fill="#8a7f96">1</text><text x="742.0" y="310.8" font-size="8" text-anchor="start" fill="#8a7f96">L1</text><path d="M728.5 320.2L737.3 343.1V350.2" stroke="#000" stroke-width="1.1" fill="none"/><path d="M761.5 302V304M761.5 308V318" stroke="#000" stroke-width="1.1"/><path d="M761.5 303.5V308" stroke="#e00" stroke-width="1.1"/><path d="M758.5 315.3L764.5 321.3M764.5 315.3L758.5 321.3" stroke="#000" stroke-width="1.5"/><text x="766.0" y="302.7" font-size="8" text-anchor="start" fill="#8a7f96">3</text><text x="766.0" y="310.8" font-size="8" text-anchor="start" fill="#8a7f96">L2</text><path d="M752.5 320.2L761.3 343.1V350.2" stroke="#000" stroke-width="1.1" fill="none"/><path d="M784.5 302V304M784.5 308V318" stroke="#000" stroke-width="1.1"/><path d="M784.5 303.5V308" stroke="#e00" stroke-width="1.1"/><path d="M781.5 315.3L787.5 321.3M787.5 315.3L781.5 321.3" stroke="#000" stroke-width="1.5"/><text x="789.0" y="302.7" font-size="8" text-anchor="start" fill="#8a7f96">5</text><text x="789.0" y="310.8" font-size="8" text-anchor="start" fill="#8a7f96">L3</text><path d="M775.5 320.2L784.3 343.1V350.2" stroke="#000" stroke-width="1.1" fill="none"/><path d="M723.5 331.2H779" stroke="#000" stroke-width="1.1" stroke-dasharray="4,3"/><path d="M697.2 331.2H723.5M698.3 326.3V335.6" stroke="#000" stroke-width="1.1"/><rect x="706.4" y="324.3" width="14.3" height="14.2" fill="none" stroke="#000" stroke-width="1.1"/><path d="M713.6 324.3V338.5M706.4 331.2H720.7" stroke="#000" stroke-width="1.1"/><path d="M713.7 338.5V375.4M713.7 359.2H725.2M713.7 375.4H725.2" stroke="#000" stroke-width="1.1" fill="none" stroke-dasharray="4,3"/><rect x="725.2" y="350.2" width="71.5" height="33.8" fill="none" stroke="#000" stroke-width="1.2"/><path d="M725.2 384H796.7" stroke="#000" stroke-width="2"/><path d="M725.2 367.1H796.7M749.4 350.2V384M773.1 350.2V384" stroke="#000" stroke-width="1.2"/><path d="M773.1 350.2V384" stroke="#000" stroke-width="2"/><path d="M737.5 350.2V354H743.5 V362.5H737.5 V367.1" stroke="#000" stroke-width="1.4" fill="none"/><text x="733.0" y="379.4" font-size="12.5" text-anchor="start" fill="#000" textLength="14" lengthAdjust="spacingAndGlyphs">I></text><path d="M761.5 350.2V354H767.5 V362.5H761.5 V367.1" stroke="#000" stroke-width="1.4" fill="none"/><text x="757.0" y="379.4" font-size="12.5" text-anchor="start" fill="#000" textLength="14" lengthAdjust="spacingAndGlyphs">I></text><path d="M784.5 350.2V354H790.5 V362.5H784.5 V367.1" stroke="#000" stroke-width="1.4" fill="none"/><text x="780.0" y="379.4" font-size="12.5" text-anchor="start" fill="#000" textLength="14" lengthAdjust="spacingAndGlyphs">I></text><text x="810" y="335.6" font-size="12.8" text-anchor="start" fill="#000" textLength="21.3" lengthAdjust="spacingAndGlyphs">-Q1</text><text x="812.9" y="363.3" font-size="9.8" text-anchor="start" fill="#000" textLength="39.8" lengthAdjust="spacingAndGlyphs">2,2-3,2A</text><text x="812.9" y="375.4" font-size="9.8" text-anchor="start" fill="#000" textLength="12" lengthAdjust="spacingAndGlyphs">3A</text><path d="M737.5 384V390M737.5 395V433.8M737.5 438.8V442" stroke="#000" stroke-width="1.1"/><path d="M737.5 390V395M737.5 433.8V438.8" stroke="#e00" stroke-width="1.1"/><text x="742.0" y="396.7" font-size="8" text-anchor="start" fill="#8a7f96">2</text><text x="742.0" y="404.8" font-size="8" text-anchor="start" fill="#8a7f96">T1</text><path d="M761.5 384V390M761.5 395V433.8M761.5 438.8V442" stroke="#000" stroke-width="1.1"/><path d="M761.5 390V395M761.5 433.8V438.8" stroke="#e00" stroke-width="1.1"/><text x="766.0" y="396.7" font-size="8" text-anchor="start" fill="#8a7f96">4</text><text x="766.0" y="404.8" font-size="8" text-anchor="start" fill="#8a7f96">T2</text><path d="M784.5 384V390M784.5 395V433.8M784.5 438.8V442" stroke="#000" stroke-width="1.1"/><path d="M784.5 390V395M784.5 433.8V438.8" stroke="#e00" stroke-width="1.1"/><text x="789.0" y="396.7" font-size="8" text-anchor="start" fill="#8a7f96">6</text><text x="789.0" y="404.8" font-size="8" text-anchor="start" fill="#8a7f96">T3</text><text x="742.0" y="433" font-size="8" text-anchor="start" fill="#8a7f96">1</text><text x="742.0" y="442" font-size="8" text-anchor="start" fill="#8a7f96">L1</text><path d="M737.5 439.6A3 3.2 0 0 0 737.5 446" stroke="#000" stroke-width="1.2" fill="none"/><path d="M731.0 444.6L737.5 469.1V475.6M737.5 481.4V534" stroke="#000" stroke-width="1.1" fill="none"/><path d="M737.5 475.6V481.4" stroke="#e00" stroke-width="1.3"/><text x="742.0" y="480" font-size="8" text-anchor="start" fill="#8a7f96">2</text><text x="742.0" y="487.9" font-size="8" text-anchor="start" fill="#8a7f96">T1</text><text x="766.0" y="433" font-size="8" text-anchor="start" fill="#8a7f96">3</text><text x="766.0" y="442" font-size="8" text-anchor="start" fill="#8a7f96">L2</text><path d="M761.5 439.6A3 3.2 0 0 0 761.5 446" stroke="#000" stroke-width="1.2" fill="none"/><path d="M755.0 444.6L761.5 469.1V475.6M761.5 481.4V534" stroke="#000" stroke-width="1.1" fill="none"/><path d="M761.5 475.6V481.4" stroke="#e00" stroke-width="1.3"/><text x="766.0" y="480" font-size="8" text-anchor="start" fill="#8a7f96">4</text><text x="766.0" y="487.9" font-size="8" text-anchor="start" fill="#8a7f96">T2</text><text x="789.0" y="433" font-size="8" text-anchor="start" fill="#8a7f96">5</text><text x="789.0" y="442" font-size="8" text-anchor="start" fill="#8a7f96">L3</text><path d="M784.5 439.6A3 3.2 0 0 0 784.5 446" stroke="#000" stroke-width="1.2" fill="none"/><path d="M778.0 444.6L784.5 469.1V475.6M784.5 481.4V534" stroke="#000" stroke-width="1.1" fill="none"/><path d="M784.5 475.6V481.4" stroke="#e00" stroke-width="1.3"/><text x="789.0" y="480" font-size="8" text-anchor="start" fill="#8a7f96">6</text><text x="789.0" y="487.9" font-size="8" text-anchor="start" fill="#8a7f96">T3</text><path d="M733.3 457.3H779.4" stroke="#000" stroke-width="1.1" stroke-dasharray="4,3"/><text x="805.4" y="455.9" font-size="13.8" text-anchor="start" fill="#000" textLength="34.6" lengthAdjust="spacingAndGlyphs">-KM1</text><text x="812.6" y="482.6" font-size="10.5" text-anchor="start" fill="#000" textLength="21" lengthAdjust="spacingAndGlyphs">3kW</text><path d="M731.1 547.3L743.8 534.3M778.3 546.3L790.7 534.3" stroke="#000" stroke-width="2"/><path d="M754.9 546.3L766.7 535.2" stroke="#000" stroke-width="1.1"/><text x="801.4" y="542.7" font-size="10.5" text-anchor="start" fill="#000" textLength="36" lengthAdjust="spacingAndGlyphs">1,5mm²</text><text x="801.4" y="554.2" font-size="10.5" text-anchor="start" fill="#000" textLength="13" lengthAdjust="spacingAndGlyphs">BK</text><path d="M737.5 534V707M761.5 534V707M784.5 534V707" stroke="#000" stroke-width="1.1"/><path d="M737.5 535.5V546M761.5 535.5V546M784.5 535.5V546" stroke="#e00" stroke-width="1.3"/><path d="M731.1 547.3L743.8 534.3M778.3 546.3L790.7 534.3" stroke="#000" stroke-width="2"/><path d="M754.9 546.3L766.7 535.2" stroke="#000" stroke-width="1.1"/><path d="M737.5 588H1100M761.5 600H1100M784.5 612H1100" stroke="#000" stroke-width="1.3"/><circle cx="737.5" cy="588" r="2.3"/><circle cx="761.5" cy="600" r="2.3"/><circle cx="784.5" cy="612" r="2.3"/><circle cx="951.5" cy="588" r="2.3"/><circle cx="974.5" cy="600" r="2.3"/><circle cx="998.5" cy="612" r="2.3"/><circle cx="737.5" cy="635.5" r="3.6" fill="#fff" stroke="#000" stroke-width="1.1"/><circle cx="737.5" cy="635.5" r="0.7"/><text x="749.0" y="648.8" font-size="11" text-anchor="start" fill="#000" textLength="6.5" lengthAdjust="spacingAndGlyphs">1</text><circle cx="761.5" cy="635.5" r="3.6" fill="#fff" stroke="#000" stroke-width="1.1"/><circle cx="761.5" cy="635.5" r="0.7"/><text x="773.0" y="648.8" font-size="11" text-anchor="start" fill="#000" textLength="6.5" lengthAdjust="spacingAndGlyphs">4</text><circle cx="784.5" cy="635.5" r="3.6" fill="#fff" stroke="#000" stroke-width="1.1"/><circle cx="784.5" cy="635.5" r="0.7"/><text x="796.0" y="648.8" font-size="11" text-anchor="start" fill="#000" textLength="6.5" lengthAdjust="spacingAndGlyphs">7</text><circle cx="808.5" cy="635.5" r="3.6" fill="#fff" stroke="#000" stroke-width="1.1"/><circle cx="808.5" cy="635.5" r="0.7"/><text x="819.2" y="648.8" font-size="11" text-anchor="start" fill="#000" textLength="13" lengthAdjust="spacingAndGlyphs">PE</text><circle cx="951.5" cy="635.5" r="3.6" fill="#fff" stroke="#000" stroke-width="1.1"/><circle cx="951.5" cy="635.5" r="0.7"/><text x="963.0" y="648.8" font-size="11" text-anchor="start" fill="#000" textLength="6.5" lengthAdjust="spacingAndGlyphs">2</text><circle cx="974.5" cy="635.5" r="3.6" fill="#fff" stroke="#000" stroke-width="1.1"/><circle cx="974.5" cy="635.5" r="0.7"/><text x="986.0" y="648.8" font-size="11" text-anchor="start" fill="#000" textLength="6.5" lengthAdjust="spacingAndGlyphs">5</text><circle cx="998.5" cy="635.5" r="3.6" fill="#fff" stroke="#000" stroke-width="1.1"/><circle cx="998.5" cy="635.5" r="0.7"/><text x="1010.0" y="648.8" font-size="11" text-anchor="start" fill="#000" textLength="6.5" lengthAdjust="spacingAndGlyphs">8</text><circle cx="1022.5" cy="635.5" r="3.6" fill="#fff" stroke="#000" stroke-width="1.1"/><circle cx="1022.5" cy="635.5" r="0.7"/><text x="1033.2" y="648.8" font-size="11" text-anchor="start" fill="#000" textLength="13" lengthAdjust="spacingAndGlyphs">PE</text><text x="701" y="640.8" font-size="15.5" text-anchor="start" fill="#000" textLength="25.5" lengthAdjust="spacingAndGlyphs">-X1</text><path d="M808.5 623V632M808.5 639V707" stroke="#000" stroke-width="1.1"/><path d="M951.5 588V632M951.5 639V782M998.5 612V632M998.5 639V782M1022.5 623V632M1022.5 639V707" stroke="#000" stroke-width="1.1"/><path d="M974.5 600V632M974.5 639V782" stroke="#000" stroke-width="2.6"/><path d="M737.5 624V629M737.5 642V647M737.5 702V707M737.5 708V713M737.5 764V770 M761.5 624V629M761.5 642V647M761.5 702V707M761.5 708V713M761.5 764V770 M784.5 624V629M784.5 642V647M784.5 702V707M784.5 708V713M784.5 764V770 M808.5 624V629M808.5 642V647M808.5 702V707M808.5 708V713 M951.5 624V629M951.5 642V647M951.5 702V707M951.5 708V713M951.5 764V770 M974.5 624V629M974.5 642V647M974.5 702V707M974.5 708V713M974.5 764V770 M998.5 624V629M998.5 642V647M998.5 702V707M998.5 708V713M998.5 764V770 M1022.5 624V629M1022.5 642V647M1022.5 702V707M1022.5 708V713" stroke="#e00" stroke-width="1.3"/><path d="M725 707.5H821.1M939 707.5H1034.9" stroke="#000" stroke-width="1.1"/><ellipse cx="986.8" cy="721.5" rx="47.5" ry="7.3" fill="none" stroke="#000" stroke-width="1" stroke-dasharray="3,2.5"/><text transform="translate(750.5,704) rotate(-90)" font-size="8.5" fill="#222" textLength="13" lengthAdjust="spacingAndGlyphs">BN</text><text transform="translate(774.5,704) rotate(-90)" font-size="8.5" fill="#222" textLength="13" lengthAdjust="spacingAndGlyphs">BK</text><text transform="translate(797.5,704) rotate(-90)" font-size="8.5" fill="#222" textLength="13" lengthAdjust="spacingAndGlyphs">GY</text><text transform="translate(821.5,703) rotate(-90)" font-size="8.5" fill="#222" textLength="20" lengthAdjust="spacingAndGlyphs">GNYE</text><text transform="translate(964.5,704) rotate(-90)" font-size="8.5" fill="#222">1</text><text transform="translate(987.5,704) rotate(-90)" font-size="8.5" fill="#222">2</text><text transform="translate(1011.5,704) rotate(-90)" font-size="8.5" fill="#222">3</text><text transform="translate(1035.5,703) rotate(-90)" font-size="8.5" fill="#222" textLength="20" lengthAdjust="spacingAndGlyphs">GNYE</text><text x="825.2" y="701.8" font-size="14" text-anchor="start" fill="#000" textLength="38.8" lengthAdjust="spacingAndGlyphs">-WM1</text><text x="825.2" y="720.5" font-size="10.8" text-anchor="start" fill="#000" textLength="57" lengthAdjust="spacingAndGlyphs">ÖLFLEX 100</text><text x="825.2" y="733" font-size="10.8" text-anchor="start" fill="#000" textLength="46" lengthAdjust="spacingAndGlyphs">4G1,5mm²</text><text x="825.2" y="744.3" font-size="10.8" text-anchor="start" fill="#000" textLength="20" lengthAdjust="spacingAndGlyphs">15m</text><text x="1038.7" y="701.8" font-size="14" text-anchor="start" fill="#000" textLength="40" lengthAdjust="spacingAndGlyphs">-WM2</text><text x="1038.7" y="720.5" font-size="10.8" text-anchor="start" fill="#000" textLength="57" lengthAdjust="spacingAndGlyphs">ÖLFLEX 100</text><text x="1038.7" y="733" font-size="10.8" text-anchor="start" fill="#000" textLength="46" lengthAdjust="spacingAndGlyphs">4G1,5mm²</text><text x="1038.7" y="744.3" font-size="10.8" text-anchor="start" fill="#000" textLength="20" lengthAdjust="spacingAndGlyphs">25m</text><text x="741.8" y="771.2" font-size="8" text-anchor="start" fill="#8a7f96" textLength="9" lengthAdjust="spacingAndGlyphs">U1</text><text x="765.8" y="771.2" font-size="8" text-anchor="start" fill="#8a7f96" textLength="9" lengthAdjust="spacingAndGlyphs">V1</text><text x="788.8" y="771.2" font-size="8" text-anchor="start" fill="#8a7f96" textLength="9" lengthAdjust="spacingAndGlyphs">W1</text><path d="M737.5 707V776.6L747.8 786.2M761.5 707V782M784.5 707V776.6L774.0 786.5" stroke="#000" stroke-width="1.1" fill="none"/><circle cx="760.9" cy="799.5" r="18" fill="none" stroke="#000" stroke-width="1.2"/><path d="M780.4 793A21 21 0 0 1 770.9 817" stroke="#000" stroke-width="1" fill="none"/><text x="760.9" y="798.9" font-size="14" text-anchor="middle" fill="#000">M</text><text x="751.9" y="810.3" font-size="12" text-anchor="start" fill="#000" textLength="7" lengthAdjust="spacingAndGlyphs">3</text><path d="M759.9 806Q762.9 801 765.4 806T770.9 806" stroke="#000" stroke-width="1" fill="none"/><path d="M808.5 707V802.5H784.5V814.5M779.5 809L784.5 813.9" stroke="#000" stroke-width="1.1" fill="none"/><path d="M784.5 814.5V820" stroke="#e00" stroke-width="1.3"/><path d="M779.5 820.5H789.5M781.0 822.9H788.0M782.5 825.3H786.5" stroke="#000" stroke-width="1.2"/><text x="820.3" y="785.6" font-size="13" text-anchor="start" fill="#000" textLength="50.5" lengthAdjust="spacingAndGlyphs">+LIEU1</text><text x="820.3" y="803.7" font-size="13" text-anchor="start" fill="#000" textLength="25" lengthAdjust="spacingAndGlyphs">-M1</text><text x="824.8" y="827.1" font-size="10.2" text-anchor="start" fill="#000" textLength="35" lengthAdjust="spacingAndGlyphs">0,25kW</text><text x="824.8" y="839.1" font-size="10.2" text-anchor="start" fill="#000" textLength="38" lengthAdjust="spacingAndGlyphs">400VAC</text><text x="741.6" y="867.4" font-size="14" text-anchor="start" fill="#000" textLength="60.7" lengthAdjust="spacingAndGlyphs">Ventilo 1</text><text x="955.8" y="771.2" font-size="8" text-anchor="start" fill="#8a7f96" textLength="9" lengthAdjust="spacingAndGlyphs">U1</text><text x="979.8" y="771.2" font-size="8" text-anchor="start" fill="#8a7f96" textLength="9" lengthAdjust="spacingAndGlyphs">V1</text><text x="1002.8" y="771.2" font-size="8" text-anchor="start" fill="#8a7f96" textLength="9" lengthAdjust="spacingAndGlyphs">W1</text><path d="M951.5 776.6L961.8 786.2M998.5 776.6L988.0 786.5" stroke="#000" stroke-width="1.1" fill="none"/><circle cx="974.9" cy="799.5" r="18" fill="none" stroke="#000" stroke-width="1.2"/><path d="M994.4 793A21 21 0 0 1 984.9 817" stroke="#000" stroke-width="1" fill="none"/><text x="974.9" y="798.9" font-size="14" text-anchor="middle" fill="#000">M</text><text x="965.9" y="810.3" font-size="12" text-anchor="start" fill="#000" textLength="7" lengthAdjust="spacingAndGlyphs">3</text><path d="M973.9 806Q976.9 801 979.4 806T984.9 806" stroke="#000" stroke-width="1" fill="none"/><path d="M1022.5 707V802.5H998.5V814.5M993.5 809L998.5 813.9" stroke="#000" stroke-width="1.1" fill="none"/><path d="M998.5 814.5V820" stroke="#e00" stroke-width="1.3"/><path d="M993.5 820.5H1003.5M995.0 822.9H1002.0M996.5 825.3H1000.5" stroke="#000" stroke-width="1.2"/><text x="1036" y="785.6" font-size="13" text-anchor="start" fill="#000" textLength="50.5" lengthAdjust="spacingAndGlyphs">+LIEU1</text><text x="1036" y="803.7" font-size="13" text-anchor="start" fill="#000" textLength="25" lengthAdjust="spacingAndGlyphs">-M2</text><text x="1038.6" y="827.1" font-size="10.2" text-anchor="start" fill="#000" textLength="29" lengthAdjust="spacingAndGlyphs">0,4kW</text><text x="1038.6" y="839.1" font-size="10.2" text-anchor="start" fill="#000" textLength="38" lengthAdjust="spacingAndGlyphs">400VAC</text><text x="955.8" y="867.4" font-size="14" text-anchor="start" fill="#000" textLength="60.7" lengthAdjust="spacingAndGlyphs">Ventilo 2</text><text x="1158" y="868" font-size="13" text-anchor="start" fill="#000" textLength="55" lengthAdjust="spacingAndGlyphs">Réserve</text><path d="M1378 903.5H1439M1408.5 896V944.5" stroke="#b4b4b4" stroke-width="1"/><path d="M1383 900H1390L1396 896M1393 900H1400M1413 900H1418L1424 896M1421 900H1428" stroke="#c4c4c4" stroke-width="0.8" fill="none"/><text x="1382.5" y="911.5" font-size="8.8" text-anchor="start" fill="#222" textLength="18.5" lengthAdjust="spacingAndGlyphs">6-C4</text></g></svg>
<div class="a" style="left:1081px;top:40px;width:654px;height:826px;background:#232323"></div>
<div class="t" style="left:1096.0px;top:48.7px;font-size:17.5px;color:#fff;font-weight:bold;"><span id="w55" style="display:inline-block;transform:scaleX(1.0148);transform-origin:left center;">Propriétés de l'élément</span></div>
<div class="a" style="left:1682px;top:42px;width:43px;height:19px;border-radius:5px;background:linear-gradient(90deg,#55b5df,#3e9dcd)"></div>
<svg class="a" style="left:1698px;top:47px" width="12" height="10"><path d="M2 1.5L10 8.5M10 1.5L2 8.5" stroke="#000" stroke-width="1.8"/></svg>
<div class="a" style="left:1089px;top:71px;width:638px;height:788px;background:#a2a2a2"></div>
<div class="a" style="left:1099px;top:115px;width:620px;height:696px;background:#adadad;border:1px solid #8c8c8c;border-radius:0 3px 3px 3px"></div>
<div class="a" style="left:1202px;top:84px;width:191px;height:32px;background:linear-gradient(#a9a9a9,#9c9c9c);border:1px solid #8a8a8a;border-bottom:none;border-radius:3px 3px 0 0"></div>
<div class="a" style="left:1392px;top:84px;width:187px;height:32px;background:linear-gradient(#a9a9a9,#9c9c9c);border:1px solid #8a8a8a;border-bottom:none;border-radius:3px 3px 0 0"></div>
<div class="a" style="left:1100px;top:81px;width:103px;height:35px;background:linear-gradient(#bdbdbd,#adadad);border:1px solid #8a8a8a;border-bottom:none;border-radius:3px 3px 0 0;box-shadow:inset 1px 1px 0 #cfcfcf"></div>
<svg class="a" style="left:1108px;top:88px" width="18" height="22" viewBox="0 0 18 22"><path d="M1 1H16V19L14 21H1Z" fill="#f2f2f2" stroke="#cfcfcf" stroke-width="0.7"/><path d="M2.5 3V19" stroke="#aaa" stroke-width="0.8" stroke-dasharray="1,1.5"/><circle cx="9.5" cy="10" r="4.8" fill="none" stroke="#999" stroke-width="0.8"/><path d="M6.2 6.7L12.8 13.3M12.8 6.7L6.2 13.3" stroke="#999" stroke-width="0.8"/></svg>
<div class="t" style="left:1136.2px;top:91.9px;font-size:14.5px;"><span id="w56" style="display:inline-block;transform:scaleX(1.0576);transform-origin:left center;">Elément</span></div>
<svg class="a" style="left:1209px;top:88px" width="24" height="22" viewBox="0 0 24 22"><circle cx="9" cy="6" r="4.5" fill="#e8c4a0" stroke="#b58a60" stroke-width="0.6"/><path d="M4.5 5Q5 1 9 1Q13 1 13.5 5Q11 3 9 3.5Q7 3 4.5 5Z" fill="#8a6040"/><path d="M1 21Q1 12 9 12Q17 12 17 21Z" fill="#f0f0f0" stroke="#bbb" stroke-width="0.7"/><circle cx="17.5" cy="16" r="5.3" fill="#1f6fd0" stroke="#0d4c9a" stroke-width="0.5"/><rect x="16.8" y="14.5" width="1.6" height="4.5" fill="#fff"/><circle cx="17.6" cy="12.8" r="0.9" fill="#fff"/></svg>
<div class="t" style="left:1240.5px;top:93.0px;font-size:14.5px;"><span id="w57" style="display:inline-block;transform:scaleX(1.0727);transform-origin:left center;">Propriétés utilisateur</span></div>
<svg class="a" style="left:1400px;top:89px;" width="21" height="21"><use href="#info"/></svg>
<div class="t" style="left:1430.0px;top:93.0px;font-size:14.5px;"><span id="w58" style="display:inline-block;transform:scaleX(1.1041);transform-origin:left center;">Informations/édition</span></div>
<svg class="a" style="left:1107px;top:127px;" width="20" height="20"><use href="#info"/></svg>
<div class="t" style="left:1131.4px;top:129.8px;font-size:16px;font-weight:bold;"><span id="w59" style="display:inline-block;transform:scaleX(1.0501);transform-origin:left center;">Définition</span></div>
<div class="t" style="left:1111.3px;top:164.3px;font-size:14.5px;"><span id="w60" style="display:inline-block;transform:scaleX(1.0501);transform-origin:left center;">Type d'élément :</span></div>
<div class="a" style="left:1327px;top:156px;width:298px;height:29px;background:linear-gradient(#b9b9b9,#a2a2a2);border:1px solid #6f6f6f;border-radius:2px;box-shadow:inset 0 1px 0 #cacaca"></div>
<div class="t" style="left:1358.0px;top:163.2px;font-size:14.5px;"><span id="w61" style="display:inline-block;transform:scaleX(1.0427);transform-origin:left center;">type général : non référé</span></div>
<svg class="a" style="left:1614px;top:162.5px;" width="8" height="16"><use href="#updn"/></svg>
<svg class="a" style="left:1336px;top:161px" width="14" height="20" viewBox="0 0 14 20"><rect x="1" y="1" width="12" height="18" fill="#f2f2f2" stroke="#aaa" stroke-width="0.7"/><rect x="3" y="4" width="3" height="4" fill="#aaa"/><rect x="8" y="4" width="3" height="4" fill="#aaa"/><rect x="4" y="10" width="6" height="3" fill="#e0a8c0"/></svg>
<svg class="a" style="left:1107px;top:207px;" width="20" height="20"><use href="#info"/></svg>
<div class="t" style="left:1131.2px;top:209.5px;font-size:16px;font-weight:bold;"><span id="w62" style="display:inline-block;transform:scaleX(1.0492);transform-origin:left center;">Identification</span></div>
<div class="t" style="left:1111.0px;top:245.4px;font-size:14.5px;"><span id="w63" style="display:inline-block;transform:scaleX(1.1084);transform-origin:left center;">Identifiant :</span></div>
<div class="a" style="left:1302px;top:250px;width:12px;height:3px;background:#46b046;border-radius:2px"></div>
<div class="a" style="left:1326px;top:239px;width:298px;height:25px;background:#fff;border:1px solid #2f78b8;border-radius:2px;box-shadow:0 0 0 1px #5fa0d8"></div>
<div class="t" style="left:1330.0px;top:244.2px;font-size:14.5px;"><span id="w64" style="display:inline-block;transform:scaleX(1.0472);transform-origin:left center;">Q1</span></div>
<svg class="a" style="left:1632px;top:239px;" width="22" height="26"><use href="#srch"/></svg>
<svg class="a" style="left:1663px;top:244px;" width="15" height="14"><use href="#chkon"/></svg>
<div class="t" style="left:1111.0px;top:278.3px;font-size:14.5px;"><span id="w65" style="display:inline-block;transform:scaleX(1.0671);transform-origin:left center;">Installation :</span></div>
<svg class="a" style="left:1301px;top:278px;" width="13" height="12"><use href="#inst"/></svg>
<div class="a" style="left:1327px;top:273px;width:297px;height:25px;background:linear-gradient(#b9b9b9,#a2a2a2);border:1px solid #6f6f6f;border-radius:2px;box-shadow:inset 0 1px 0 #cacaca"></div>
<div class="t" style="left:1330.6px;top:278.2px;font-size:14.5px;"><span id="w66" style="display:inline-block;transform:scaleX(0.9626);transform-origin:left center;">INST1</span></div>
<svg class="a" style="left:1613px;top:277.5px;" width="8" height="16"><use href="#updn"/></svg>
<svg class="a" style="left:1632px;top:273px;" width="22" height="26"><use href="#penb"/></svg>
<svg class="a" style="left:1663px;top:278px;" width="15" height="14"><use href="#chk"/></svg>
<div class="t" style="left:1111.0px;top:313.1px;font-size:14.5px;"><span id="w67" style="display:inline-block;transform:scaleX(1.0750);transform-origin:left center;">Implantation :</span></div>
<svg class="a" style="left:1300px;top:312px;" width="15" height="15"><use href="#lieu"/></svg>
<div class="a" style="left:1327px;top:307px;width:297px;height:25px;background:linear-gradient(#b9b9b9,#a2a2a2);border:1px solid #6f6f6f;border-radius:2px;box-shadow:inset 0 1px 0 #cacaca"></div>
<div class="t" style="left:1330.6px;top:312.2px;font-size:14.5px;"><span id="w68" style="display:inline-block;transform:scaleX(1.0026);transform-origin:left center;">ARM1</span></div>
<svg class="a" style="left:1613px;top:311.5px;" width="8" height="16"><use href="#updn"/></svg>
<svg class="a" style="left:1632px;top:307px;" width="22" height="26"><use href="#penb"/></svg>
<svg class="a" style="left:1663px;top:312px;" width="15" height="14"><use href="#chk"/></svg>
<svg class="a" style="left:1107px;top:360px;" width="20" height="20"><use href="#info"/></svg>
<div class="t" style="left:1131.2px;top:362.5px;font-size:16px;font-weight:bold;"><span id="w69" style="display:inline-block;transform:scaleX(1.0113);transform-origin:left center;">Description</span></div>
<div class="t" style="left:1111.0px;top:389.9px;font-size:14.5px;"><span id="w70" style="display:inline-block;transform:scaleX(1.0208);transform-origin:left center;">Bornes :</span></div>
<div class="a" style="left:1326px;top:385px;width:298px;height:24px;background:#fff;border:1px solid #7a7a7a;border-radius:2px"></div>
<div class="t" style="left:1330.0px;top:389.7px;font-size:14.5px;"><span id="w71" style="display:inline-block;transform:scaleX(1.0040);transform-origin:left center;">1:2:3:4:5:6</span></div>
<svg class="a" style="left:1632px;top:384px;" width="22" height="26"><use href="#srch"/></svg>
<svg class="a" style="left:1663px;top:389px;" width="15" height="14"><use href="#chkon"/></svg>
<div class="t" style="left:1111.0px;top:422.9px;font-size:14.5px;"><span id="w72" style="display:inline-block;transform:scaleX(1.0389);transform-origin:left center;">Fonction :</span></div>
<div class="a" style="left:1326px;top:418px;width:298px;height:24px;background:#fff;border:1px solid #7a7a7a;border-radius:2px"></div>
<div class="t" style="left:1330.0px;top:422.7px;font-size:14.5px;"><span id="w73" style="display:inline-block;transform:scaleX(1.0635);transform-origin:left center;">Protection Ventilo 1 et 2</span></div>
<svg class="a" style="left:1632px;top:417px;" width="22" height="26"><use href="#srch"/></svg>
<svg class="a" style="left:1663px;top:422px;" width="15" height="14"><use href="#chk"/></svg>
<div class="t" style="left:1111.0px;top:450.3px;font-size:14.5px;"><span id="w74" style="display:inline-block;transform:scaleX(1.0416);transform-origin:left center;">Commentaire :</span></div>
<div class="a" style="left:1326px;top:450px;width:298px;height:25px;background:#fff;border:1px solid #7a7a7a;border-radius:2px"></div>
<svg class="a" style="left:1632px;top:450px;" width="22" height="26"><use href="#srch"/></svg>
<svg class="a" style="left:1663px;top:452px;" width="15" height="14"><use href="#chk"/></svg>
<svg class="a" style="left:1107px;top:516px;" width="20" height="20"><use href="#info"/></svg>
<div class="t" style="left:1131.2px;top:519.5px;font-size:16px;font-weight:bold;"><span id="w75" style="display:inline-block;transform:scaleX(1.0700);transform-origin:left center;">Article</span></div>
<div class="a" style="left:1111px;top:536px;width:599px;height:252px;background:#a3a3a3;border:1px solid #8e8e8e;border-top-color:#858585"></div>
<div class="a" style="left:1690px;top:537px;width:20px;height:250px;background:#a3a3a3"></div>
<svg class="a" style="left:1695px;top:540px" width="10" height="8"><path d="M5 1L9 7H1Z" fill="#8e8e8e"/></svg>
<div class="a" style="left:1691px;top:550px;width:19px;height:218px;border:1px solid #8a8a8a;border-radius:6px;background:#a9a9a9"></div>
<div class="a" style="left:1691px;top:557px;width:19px;height:33px;background:linear-gradient(90deg,#55b3dd,#3d9bca);border:1px solid #3a7fa8;border-radius:5px"></div>
<svg class="a" style="left:1695px;top:774px" width="10" height="8"><path d="M1 1H9L5 7Z" fill="#333"/></svg>
<div class="t" style="left:1117.7px;top:553.7px;font-size:14.5px;color:#555;font-weight:bold;">1.</div>
<div class="a" style="left:1142px;top:549px;width:1px;height:117px;background:#8a8a8a;box-shadow:1px 0 0 #b5b5b5"></div>
<div class="a" style="left:1180px;top:549px;width:1px;height:117px;background:#8a8a8a;box-shadow:1px 0 0 #b5b5b5"></div>
<div class="a" style="left:1151px;top:549px;width:21px;height:25px;background:linear-gradient(#bcbcbc,#a2a2a2);border:1px solid #7a7a7a;border-radius:2px"></div>
<svg class="a" style="left:1153px;top:552px" width="17" height="18" viewBox="0 0 17 18"><path d="M8.5 1L16 9H11.5V16H5.5V9H1Z" fill="#6d9be0" stroke="#2f5ea8" stroke-width="0.9"/></svg>
<div class="a" style="left:1151px;top:642px;width:21px;height:24px;background:linear-gradient(#bcbcbc,#a2a2a2);border:1px solid #7a7a7a;border-radius:2px"></div>
<svg class="a" style="left:1153px;top:645px" width="17" height="18" viewBox="0 0 17 18"><path d="M8.5 17L16 9H11.5V2H5.5V9H1Z" fill="#6d9be0" stroke="#2f5ea8" stroke-width="0.9"/></svg>
<div class="a" style="left:1113px;top:582px;width:21px;height:24px;background:linear-gradient(#bcbcbc,#a2a2a2);border:1px solid #7a7a7a;border-radius:2px"></div>
<svg class="a" style="left:1115px;top:585px" width="17" height="18" viewBox="0 0 17 18"><path d="M2.5 3L14.5 15M14.5 3L2.5 15" stroke="#e02020" stroke-width="4"/><path d="M2.5 3L14.5 15M14.5 3L2.5 15" stroke="#ff5a5a" stroke-width="1.3"/></svg>
<div class="a" style="left:1113px;top:642px;width:21px;height:24px;background:linear-gradient(#bcbcbc,#a2a2a2);border:1px solid #7a7a7a;border-radius:2px"></div>
<svg class="a" style="left:1115px;top:645px" width="17" height="18" viewBox="0 0 17 18"><path d="M6.5 1.5H10.5V7H16V11H10.5V16.5H6.5V11H1V7H6.5Z" fill="#3fbf3f" stroke="#1e8c1e" stroke-width="0.9"/></svg>
<div class="t" style="left:1188.3px;top:554.3px;font-size:14.5px;"><span id="w76" style="display:inline-block;transform:scaleX(1.0119);transform-origin:left center;">Fabricant :</span></div>
<div class="t" style="left:1326.3px;top:554.3px;font-size:14.5px;"><span id="w77" style="display:inline-block;transform:scaleX(0.9241);transform-origin:left center;">SIEMENS</span></div>
<svg class="a" style="left:1633px;top:549px;" width="21" height="25"><use href="#srch"/></svg>
<svg class="a" style="left:1664px;top:555px;" width="14" height="13"><use href="#chk"/></svg>
<div class="t" style="left:1188.3px;top:587.2px;font-size:14.5px;"><span id="w78" style="display:inline-block;transform:scaleX(1.0221);transform-origin:left center;">Référence :</span></div>
<div class="t" style="left:1326.3px;top:587.2px;font-size:14.5px;"><span id="w79" style="display:inline-block;transform:scaleX(0.9539);transform-origin:left center;">ABCD-EFGH-IJKL-MNOP</span></div>
<svg class="a" style="left:1664px;top:587px;" width="14" height="13"><use href="#chk"/></svg>
<div class="t" style="left:1188.3px;top:616.5px;font-size:14.5px;"><span id="w80" style="display:inline-block;transform:scaleX(1.0391);transform-origin:left center;">Désignation :</span></div>
<div class="t" style="left:1326.3px;top:616.5px;font-size:14.5px;"><span id="w81" style="display:inline-block;transform:scaleX(1.0356);transform-origin:left center;">Disjoncteur-moteur 2,2...3,2A, tripolaire...</span></div>
<svg class="a" style="left:1664px;top:617px;" width="14" height="13"><use href="#chk"/></svg>
<div class="t" style="left:1188.3px;top:646.1px;font-size:14.5px;"><span id="w82" style="display:inline-block;transform:scaleX(1.0734);transform-origin:left center;">Quantité :</span></div>
<div class="a" style="left:1327px;top:642px;width:298px;height:24px;background:#fff;border:1px solid #7a7a7a;border-radius:2px"></div>
<div class="t" style="left:1331.0px;top:646.7px;font-size:14.5px;">1</div>
<div class="t" style="left:1631.8px;top:646.1px;font-size:14.5px;"><span id="w83" style="display:inline-block;transform:scaleX(1.0031);transform-origin:left center;">pc.</span></div>
<svg class="a" style="left:1664px;top:647px;" width="14" height="13"><use href="#chk"/></svg>
<div class="a" style="left:1490px;top:823px;width:109px;height:28px;background:linear-gradient(#b8b8b8,#a0a0a0);border:1px solid #6f6f6f;border-radius:2px;box-shadow:inset 0 1px 0 #cacaca"></div>
<div class="t" style="left:1044.3px;width:1000px;text-align:center;top:829.7px;font-size:14.5px;"><span id="w84" style="display:inline-block;transform:scaleX(1.0659);transform-origin:center center;">Annuler</span></div>
<div class="a" style="left:1610px;top:823px;width:109px;height:28px;background:linear-gradient(#b8b8b8,#a0a0a0);border:1px solid #6f6f6f;border-radius:2px;box-shadow:inset 0 1px 0 #cacaca"></div>
<div class="t" style="left:1164.2px;width:1000px;text-align:center;top:829.7px;font-size:14.5px;"><span id="w85" style="display:inline-block;transform:scaleX(1.0772);transform-origin:center center;">Appliquer</span></div>
<svg class="a" style="left:0;top:0" width="1804" height="1040" viewBox="0 0 1804 1040"><g fill="none" stroke="#ff0000" stroke-width="5" stroke-linejoin="round" stroke-linecap="round"><path d="M56 228.5 C75 227 112 227 127 228 C140.5 229 140.5 248 128 249 C110 250 70 249 55 248.5 C41 247.5 42 230 56 228.5 Z" stroke-width="5.5"/><path d="M72 273 C95 272 125 272 143 274 C157 276 157 300 143 301 C120 302.5 95 302 74 301 C58 300 57 274 72 273 Z" stroke-width="5.5"/><path d="M88 413.5 C105 412.5 125 413 133 414 C143 416 143 440 132 443 C115 445.5 95 445 86 444 C74 442 74 415 88 413.5 Z" stroke-width="5.5"/><path d="M45.0 246.0 C44.5 248.7 43.3 254.5 42.0 262.0 C40.7 269.5 38.4 280.3 37.3 291.0 C36.2 301.7 34.5 315.6 35.5 326.0 C36.5 336.4 39.8 345.0 43.0 353.4 C46.2 361.8 49.6 368.7 54.6 376.4 C59.6 384.1 68.0 393.4 73.0 399.5 C78.0 405.6 82.7 411.0 84.6 413.3" stroke-width="5.5"/><path d="M78.8 301.0 C79.0 307.5 79.6 327.4 80.0 340.0 C80.4 352.6 80.5 367.2 81.0 376.4 C81.5 385.6 82.0 388.9 83.0 395.0 C84.0 401.1 86.2 410.0 86.9 413.0" stroke-width="5.5"/><path d="M132.0 444.0 L139.7 466.0 L148.1 482.9 L160.1 499.7 L172.1 521.4 L186.6 545.4 L196.2 564.6 L210.6 583.9 L227.4 603.1 L253.9 629.6 L273.1 646.4 L292.4 663.2 L311.6 677.7 L321.2 685.4 L342.3 704.4 L363.5 719.2 L384.6 729.8 L405.8 744.6 L426.9 755.2 L448.0 770.0 L460.0 777.5 L480.0 789.5 L500.0 801.0 L520.0 812.0 L540.0 826.0 L560.0 835.5 L580.0 841.5 L600.0 850.0 L620.0 859.0 L637.0 865.5 L651.0 870.6 L676.5 879.5 L702.0 887.2 L727.5 896.1 L753.0 907.6 L778.5 914.0 L804.0 921.6 L829.5 929.2 L855.0 933.1 L880.5 936.9 L906.0 943.3 L931.5 949.6 L957.0 953.5 L982.5 953.5 L1008.0 958.6 L1033.5 961.1 L1060.0 962.4 L1090.8 963.6 L1150.0 966.0 L1209.4 968.7 L1218.0 971.7 L1294.0 973.8 L1353.4 979.3 L1412.7 981.4 L1463.5 983.5 L1518.6 982.7 L1522.8 976.0 L1596.0 975.0" stroke-width="5.8"/><path d="M1596.0 966.6 C1597.9 963.1 1601.3 950.7 1607.5 945.4 C1613.7 940.1 1623.1 937.4 1633.0 934.8 C1642.9 932.2 1655.5 930.4 1666.8 929.8 C1678.1 929.2 1689.4 929.4 1700.7 931.0 C1712.0 932.6 1725.9 937.2 1734.6 939.5 C1743.3 941.8 1748.1 941.7 1753.0 944.5 C1757.9 947.3 1761.5 951.4 1764.0 956.5 C1766.5 961.6 1767.6 969.4 1768.0 975.0 C1768.4 980.6 1768.0 985.8 1766.5 990.0 C1765.0 994.2 1763.4 998.0 1759.0 1000.5 C1754.6 1003.0 1751.1 1003.8 1740.0 1004.8 C1728.9 1005.8 1707.3 1006.7 1692.3 1006.3 C1677.3 1005.9 1662.7 1004.6 1650.0 1002.2 C1637.3 999.8 1624.5 995.8 1616.0 992.0 C1607.5 988.2 1602.3 983.5 1599.0 979.3 C1595.7 975.1 1596.5 968.7 1596.0 966.6" stroke-width="5.5"/><path d="M1086.0 293.2 C1082.1 293.2 1071.6 293.1 1062.8 293.2 C1054.0 293.3 1041.8 293.2 1032.9 294.0 C1024.0 294.8 1018.5 296.5 1009.6 298.2 C1000.7 299.9 990.2 302.4 979.7 304.0 C969.2 305.6 957.5 306.7 946.4 308.1 C935.3 309.5 924.3 310.6 913.2 312.3 C902.1 314.0 890.6 315.5 879.9 318.1 C869.2 320.7 854.1 326.4 849.0 328.1" stroke-width="4.6"/><path d="M1107.0 234.5 C1105.7 237.3 1101.5 246.2 1099.4 251.6 C1097.3 256.9 1096.2 261.3 1094.4 266.6 C1092.6 271.9 1090.0 277.7 1088.6 283.2 C1087.2 288.7 1086.5 294.0 1086.1 299.8 C1085.7 305.6 1085.0 313.1 1086.1 318.1 C1087.2 323.1 1090.0 326.8 1092.8 329.8 C1095.6 332.9 1099.4 334.2 1102.7 336.4 C1106.0 338.6 1111.0 341.9 1112.7 343.0" stroke-width="4.6"/><path d="M875 303.5L849 328.5L881.5 337.5" stroke-width="6"/></g></svg>
<div class="t" style="left:1195.5px;top:240.1px;font-size:23.5px;color:#ff0000;">(Label)</div>
</body></html>
